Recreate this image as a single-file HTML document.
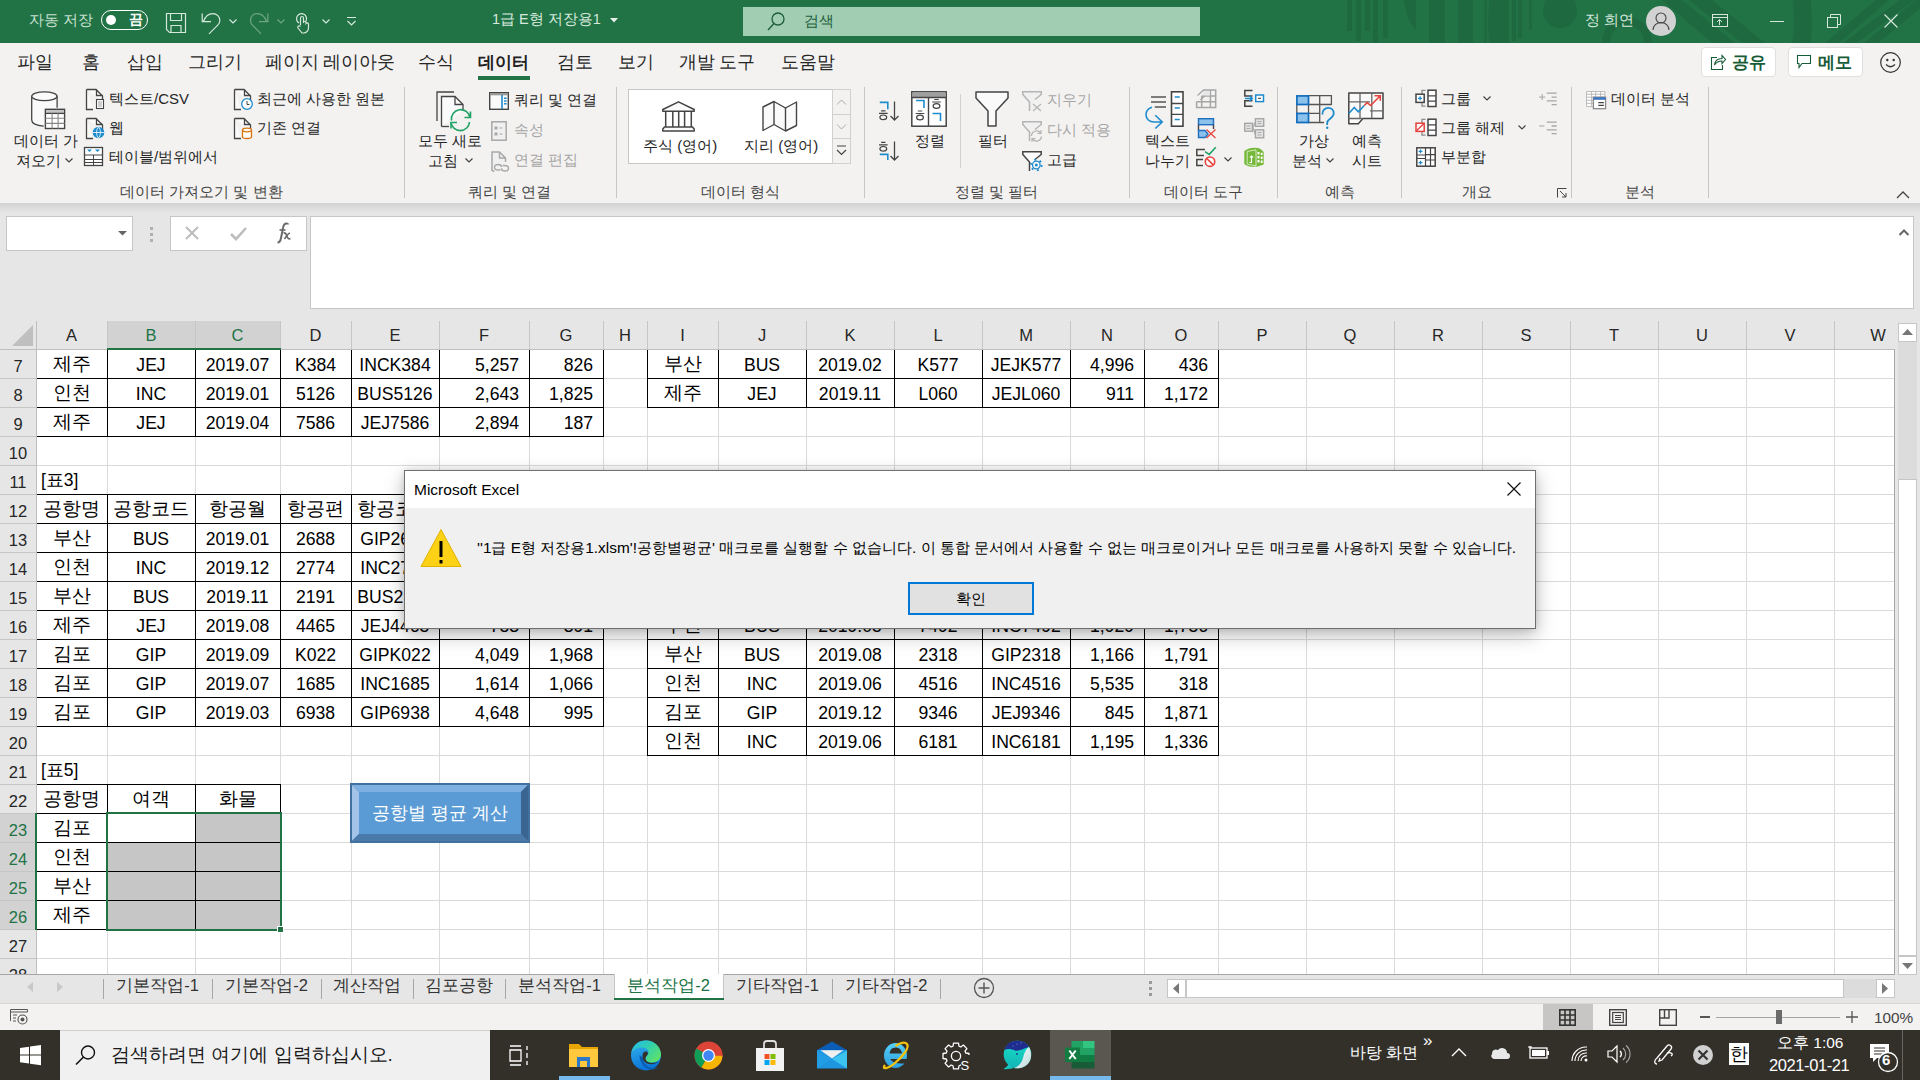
<!DOCTYPE html><html><head><meta charset="utf-8"><style>
*{box-sizing:border-box;margin:0;padding:0}
html,body{width:1920px;height:1080px;overflow:hidden;background:#fff;font-family:"Liberation Sans",sans-serif;color:#000}
.a{position:absolute}
.t{position:absolute;white-space:pre;line-height:1}
svg{position:absolute;overflow:visible}
</style></head><body><div class="a" style="left:0px;top:0px;width:1920px;height:43px;background:#217346"></div>
<svg style="left:0;top:0" width="1920" height="43" viewBox="0 0 1920 43"><defs><clipPath id="tb"><rect x="0" y="0" width="1920" height="43"/></clipPath></defs>
<g fill="#1f6940" clip-path="url(#tb)">
<rect x="1347" y="0" width="5" height="31"/><rect x="1356" y="0" width="5" height="41"/><rect x="1365" y="0" width="5" height="31"/><rect x="1373" y="0" width="5" height="43"/><rect x="1383" y="0" width="5" height="38"/>
<path d="M1404 0 H1416 V30 Q1406 20 1404 0 Z"/>
<rect x="1429" y="0" width="16" height="43"/><rect x="1458" y="0" width="15" height="43"/>
<rect x="1484" y="0" width="3" height="43"/><rect x="1491" y="0" width="6" height="43"/><rect x="1498" y="0" width="4" height="43"/><rect x="1505" y="0" width="4" height="43"/><rect x="1512" y="0" width="4" height="41"/><rect x="1518" y="0" width="4" height="38"/><rect x="1529" y="0" width="3" height="30"/>
<circle cx="1560" cy="11" r="17"/>
<circle cx="1627" cy="42" r="21" fill="none" stroke="#1f6940" stroke-width="8"/>
<path d="M1662 0 L1682 0 L1735 43 L1712 43 Z"/><path d="M1689 0 L1712 0 L1765 43 L1742 43 Z"/>
<circle cx="1650" cy="21" r="153" fill="none" stroke="#1f6940" stroke-width="18"/>
<path d="M1825 43 L1839 43 L1889 0 L1876 0 Z"/><path d="M1843 43 L1857 43 L1914 0 L1900 0 Z"/><path d="M1864 43 L1878 43 L1930 0 L1916 0 Z"/>
</g></svg>
<div class="t" style="left:29px;top:12px;font-size:15px;color:#c8e0d0;">자동 저장</div>
<div class="a" style="left:101px;top:10px;width:47px;height:20px;border:1.5px solid #fff;border-radius:10px"></div>
<div class="a" style="left:106px;top:15px;width:10px;height:10px;border-radius:50%;background:#fff"></div>
<div class="t" style="left:129px;top:12px;font-size:14px;color:#fff;font-weight:bold">끔</div>
<svg style="left:166px;top:13px" width="20" height="20" viewBox="0 0 20 20"><path d="M0.5 0.5 H19.5 V19.5 H3.5 L0.5 16.5 Z" fill="none" stroke="#d5e8dc" stroke-width="1.2"/><path d="M4.5 0.5 V7.5 H15.5 V0.5" fill="none" stroke="#d5e8dc" stroke-width="1.2"/><path d="M5 19.5 V12.5 H15 V19.5" fill="none" stroke="#d5e8dc" stroke-width="1.2"/></svg>
<svg style="left:201px;top:13px" width="20" height="22" viewBox="0 0 20 22"><path d="M1.2 0.4 V8.6 H10" fill="none" stroke="#d5e8dc" stroke-width="1.2"/><path d="M2.5 8.3 C4.5 3 8 0.6 11.8 0.6 C16 0.6 18.8 3.8 18.8 7.5 C18.8 9.2 18.2 10.6 17 11.8 L8 20.8" fill="none" stroke="#d5e8dc" stroke-width="1.2"/></svg>
<svg style="left:229px;top:19px" width="8" height="5" viewBox="0 0 8 5"><path d="M0.5 0.5 L4 4 L7.5 0.5" fill="none" stroke="#d5e8dc" stroke-width="1.2"/></svg>
<svg style="left:250px;top:13px" width="20" height="22" viewBox="0 0 20 22"><path d="M17.8 0.4 V8.6 H9" fill="none" stroke="#6fa585" stroke-width="1.2"/><path d="M16.5 8.3 C14.5 3 11 0.6 7.2 0.6 C3 0.6 0.5 3.8 0.5 7.5 C0.5 9.2 1 10.6 2.2 11.8 L11 20.8" fill="none" stroke="#6fa585" stroke-width="1.2"/></svg>
<svg style="left:277px;top:19px" width="8" height="5" viewBox="0 0 8 5"><path d="M0.5 0.5 L4 4 L7.5 0.5" fill="none" stroke="#6fa585" stroke-width="1.2"/></svg>
<svg style="left:295px;top:13px" width="15" height="20" viewBox="0 0 15 20"><path d="M4 10 A5 5 0 1 1 11 8" fill="none" stroke="#d5e8dc" stroke-width="1.2"/><path d="M5.5 12 V5 A1.5 1.5 0 0 1 8.5 5 V10 M8.5 9 A1.4 1.4 0 0 1 11 9 V10.5 A1.4 1.4 0 0 1 13.5 11 V15 A5 5 0 0 1 8.5 20 H7 L3 15 A1.4 1.4 0 0 1 5.5 13.5" fill="none" stroke="#d5e8dc" stroke-width="1.2"/></svg>
<svg style="left:322px;top:19px" width="8" height="5" viewBox="0 0 8 5"><path d="M0.5 0.5 L4 4 L7.5 0.5" fill="none" stroke="#d5e8dc" stroke-width="1.2"/></svg>
<svg style="left:347px;top:17px" width="9" height="9" viewBox="0 0 9 9"><path d="M0 0.5 H9 M0.5 4 L4.5 8 L8.5 4" fill="none" stroke="#d5e8dc" stroke-width="1.2"/></svg>
<div class="t" style="left:492px;top:12px;font-size:14.5px;color:#d5e8dc;">1급 E형 저장용1</div>
<svg style="left:610px;top:18px" width="8" height="5" viewBox="0 0 8 5"><path d="M0 0 H8 L4 4.5 Z" fill="#e8f2ec"/></svg>
<div class="a" style="left:743px;top:7px;width:457px;height:29px;background:#a1cdb3"></div>
<svg style="left:767px;top:12px" width="18" height="19" viewBox="0 0 18 19"><circle cx="11" cy="7" r="6" fill="none" stroke="#1d5e3a" stroke-width="1.3"/><path d="M7 11.5 L1 18" stroke="#1d5e3a" stroke-width="1.4"/></svg>
<div class="t" style="left:804px;top:13px;font-size:15px;color:#1d5e3a;">검색</div>
<div class="t" style="left:1585px;top:12px;font-size:15px;color:#d5e8dc;">정 희연</div>
<div class="a" style="left:1646px;top:6px;width:30px;height:30px;border-radius:50%;background:#d2d2d2"></div>
<svg style="left:1652px;top:12px" width="18" height="19" viewBox="0 0 18 19"><circle cx="9" cy="6" r="5" fill="none" stroke="#444" stroke-width="1.1"/><path d="M1 18 A8 7.5 0 0 1 17 18" fill="none" stroke="#444" stroke-width="1.1"/></svg>
<svg style="left:1712px;top:14px" width="16" height="14" viewBox="0 0 16 14"><rect x="0.5" y="0.5" width="15" height="12" fill="none" stroke="#d5e8dc" stroke-width="1"/><path d="M0.5 3.5 H15.5 M7.5 11 V5.5 M5 8 L7.5 5.5 L10 8" fill="none" stroke="#d5e8dc" stroke-width="1"/></svg>
<svg style="left:1770px;top:21px" width="14" height="2" viewBox="0 0 14 2"><path d="M0 0.5 H14" stroke="#d5e8dc" stroke-width="1"/></svg>
<svg style="left:1827px;top:14px" width="14" height="14" viewBox="0 0 14 14"><rect x="0.5" y="3.5" width="10" height="10" fill="none" stroke="#d5e8dc" stroke-width="1"/><path d="M3.5 3.5 V0.5 H13.5 V10.5 H10.5" fill="none" stroke="#d5e8dc" stroke-width="1"/></svg>
<svg style="left:1884px;top:14px" width="14" height="14" viewBox="0 0 14 14"><path d="M0.5 0.5 L13.5 13.5 M13.5 0.5 L0.5 13.5" stroke="#d5e8dc" stroke-width="1.2"/></svg>
<div class="a" style="left:0px;top:43px;width:1920px;height:160px;background:#f3f2f1"></div>
<div class="t" style="left:16.5px;top:53.7px;font-size:17.8px;color:#262626;">파일</div>
<div class="t" style="left:81.5px;top:53.7px;font-size:17.8px;color:#262626;">홈</div>
<div class="t" style="left:126.5px;top:53.7px;font-size:17.8px;color:#262626;">삽입</div>
<div class="t" style="left:187.5px;top:53.7px;font-size:17.8px;color:#262626;">그리기</div>
<div class="t" style="left:264.5px;top:53.7px;font-size:17.8px;color:#262626;">페이지 레이아웃</div>
<div class="t" style="left:417.5px;top:53.7px;font-size:17.8px;color:#262626;">수식</div>
<div class="t" style="left:478px;top:54px;font-size:17px;color:#202020;font-weight:bold">데이터</div>
<div class="t" style="left:556.5px;top:53.7px;font-size:17.8px;color:#262626;">검토</div>
<div class="t" style="left:617.5px;top:53.7px;font-size:17.8px;color:#262626;">보기</div>
<div class="t" style="left:678.5px;top:53.7px;font-size:17.8px;color:#262626;">개발 도구</div>
<div class="t" style="left:780.5px;top:53.7px;font-size:17.8px;color:#262626;">도움말</div>
<div class="a" style="left:478px;top:76px;width:52px;height:4px;background:#217346"></div>
<div class="a" style="left:1701px;top:47px;width:75px;height:30px;background:#fff;border:1px solid #e1dfdd;border-radius:4px"></div>
<div class="a" style="left:1788px;top:47px;width:75px;height:30px;background:#fff;border:1px solid #e1dfdd;border-radius:4px"></div>
<svg style="left:1711px;top:54px" width="15" height="16" viewBox="0 0 15 16"><path d="M6 3.5 H0.5 V15.5 H11.5 V11" fill="none" stroke="#185c37" stroke-width="1.1"/><path d="M3.5 11 C4 6 7 4.5 11 4.5 V1.5 L14.5 5.5 L11 9.5 V7 C8 7 5.5 8 3.5 11 Z" fill="none" stroke="#185c37" stroke-width="1.1"/></svg>
<div class="t" style="left:1732px;top:54px;font-size:16.5px;color:#185c37;font-weight:bold">공유</div>
<svg style="left:1797px;top:55px" width="14" height="14" viewBox="0 0 14 14"><path d="M0.5 0.5 H13.5 V8.5 H5 L2 12.5 V8.5 H0.5 Z" fill="none" stroke="#185c37" stroke-width="1.1"/></svg>
<div class="t" style="left:1818px;top:54px;font-size:16.5px;color:#185c37;font-weight:bold">메모</div>
<svg style="left:1880px;top:52px" width="21" height="21" viewBox="0 0 21 21"><circle cx="10.5" cy="10.5" r="9.8" fill="none" stroke="#333" stroke-width="1.2"/><circle cx="7.3" cy="8" r="1.2" fill="#333"/><circle cx="13.7" cy="8" r="1.2" fill="#333"/><path d="M6 12.5 Q10.5 17 15 12.5" fill="none" stroke="#333" stroke-width="1.2"/></svg>
<div class="a" style="left:404px;top:87px;width:1px;height:111px;background:#c8c6c4"></div>
<div class="a" style="left:616px;top:87px;width:1px;height:111px;background:#c8c6c4"></div>
<div class="a" style="left:864px;top:87px;width:1px;height:111px;background:#c8c6c4"></div>
<div class="a" style="left:1129px;top:87px;width:1px;height:111px;background:#c8c6c4"></div>
<div class="a" style="left:1277px;top:87px;width:1px;height:111px;background:#c8c6c4"></div>
<div class="a" style="left:1401px;top:87px;width:1px;height:111px;background:#c8c6c4"></div>
<div class="a" style="left:1571px;top:87px;width:1px;height:111px;background:#c8c6c4"></div>
<div class="a" style="left:1708px;top:87px;width:1px;height:111px;background:#c8c6c4"></div>
<div class="t" style="left:120px;top:184px;font-size:15px;color:#444;">데이터 가져오기 및 변환</div>
<div class="t" style="left:468px;top:184px;font-size:15px;color:#444;">쿼리 및 연결</div>
<div class="t" style="left:701px;top:184px;font-size:15px;color:#444;">데이터 형식</div>
<div class="t" style="left:955px;top:184px;font-size:15px;color:#444;">정렬 및 필터</div>
<div class="t" style="left:1164px;top:184px;font-size:15px;color:#444;">데이터 도구</div>
<div class="t" style="left:1325px;top:184px;font-size:15px;color:#444;">예측</div>
<div class="t" style="left:1462px;top:184px;font-size:15px;color:#444;">개요</div>
<div class="t" style="left:1625px;top:184px;font-size:15px;color:#444;">분석</div>
<svg style="left:1896px;top:191px" width="14" height="8" viewBox="0 0 14 8"><path d="M1 7 L7 1 L13 7" fill="none" stroke="#444" stroke-width="1.3"/></svg>
<svg style="left:31px;top:91px" width="35" height="39" viewBox="0 0 35 39"><path d="M0.7 5.5 V29 C0.7 32.5 6 34.5 12.7 35.2 V18 H26.1 V5.5 Z" fill="#fafafa"/><path d="M0.7 5.5 V29 C0.7 32.5 6 34.5 12.7 35.2" fill="none" stroke="#444" stroke-width="1.3"/><ellipse cx="13.4" cy="5.3" rx="12.7" ry="4.4" fill="#fafafa" stroke="#444" stroke-width="1.3"/><path d="M26.1 5.3 V16.7" stroke="#444" stroke-width="1.3"/><rect x="14.4" y="18.3" width="19.2" height="19.2" fill="#fff" stroke="#444" stroke-width="1.4"/><rect x="15.1" y="19" width="17.8" height="3.3" fill="#c4c4c4"/><path d="M14.4 22.4 H33.6" stroke="#444" stroke-width="1.3"/><path d="M21.1 22.4 V37.5 M27.1 22.4 V37.5 M14.4 27.3 H33.6 M14.4 32.4 H33.6" stroke="#888" stroke-width="1.1"/></svg>
<div class="t" style="left:14px;top:133px;font-size:15px;color:#262626;">데이터 가</div>
<div class="t" style="left:16px;top:153px;font-size:15px;color:#262626;">져오기</div>
<svg style="left:65px;top:158px" width="8" height="5" viewBox="0 0 8 5"><path d="M0.5 0.5 L4 4 L7.5 0.5" fill="none" stroke="#444" stroke-width="1.2"/></svg>
<svg style="left:86px;top:89px" width="20" height="21" viewBox="0 0 20 21"><path d="M0.5 0.5 H10 L16.5 7 V12 M0.5 0.5 V20.5 H7" fill="#fafafa" stroke="#444" stroke-width="1.3"/><path d="M10.5 0.5 V6.5 H16.5" fill="none" stroke="#444" stroke-width="1.3"/><rect x="10.5" y="10.5" width="7" height="9" fill="#fff" stroke="#444" stroke-width="1.1"/><path d="M12 13 H16 M12 15 H16 M12 17 H16" stroke="#888" stroke-width="0.8"/></svg>
<div class="t" style="left:109px;top:91px;font-size:15px;color:#262626;">텍스트/CSV</div>
<svg style="left:86px;top:118px" width="20" height="21" viewBox="0 0 20 21"><path d="M0.5 0.5 H10 L16.5 7 V12 M0.5 0.5 V20.5 H7" fill="#fafafa" stroke="#444" stroke-width="1.3"/><path d="M10.5 0.5 V6.5 H16.5" fill="none" stroke="#444" stroke-width="1.3"/><circle cx="12.5" cy="14.5" r="5.8" fill="#1e8bcd"/><path d="M6.7 14.5 H18.3" stroke="#fff" stroke-width="0.8"/><path d="M12.5 9 C10 11 10 18 12.5 20 C15 18 15 11 12.5 9 Z" fill="none" stroke="#fff" stroke-width="0.8"/></svg>
<div class="t" style="left:109px;top:120px;font-size:15px;color:#262626;">웹</div>
<svg style="left:84px;top:147px" width="20" height="20" viewBox="0 0 20 20"><rect x="0.5" y="0.5" width="18" height="18" fill="#fff" stroke="#444" stroke-width="1.3"/><path d="M0.5 8 H18.5 M0.5 12.5 H18.5 M0.5 15.5 H18.5 M9.5 8 V18.5" stroke="#444" stroke-width="1"/><path d="M3 2.5 H8 L5.5 5 Z M11 2.5 H16 L13.5 5 Z" fill="#1e8bcd"/></svg>
<div class="t" style="left:109px;top:149px;font-size:15px;color:#262626;">테이블/범위에서</div>
<svg style="left:234px;top:89px" width="20" height="21" viewBox="0 0 20 21"><path d="M0.5 0.5 H10 L16.5 7 V12 M0.5 0.5 V20.5 H7" fill="#fafafa" stroke="#444" stroke-width="1.3"/><path d="M10.5 0.5 V6.5 H16.5" fill="none" stroke="#444" stroke-width="1.3"/><circle cx="13" cy="15" r="5.3" fill="#fff" stroke="#1e8bcd" stroke-width="1.3"/><path d="M13 12 V15.5 H15.5" fill="none" stroke="#444" stroke-width="1"/></svg>
<div class="t" style="left:257px;top:91px;font-size:15px;color:#262626;">최근에 사용한 원본</div>
<svg style="left:234px;top:118px" width="20" height="21" viewBox="0 0 20 21"><path d="M0.5 0.5 H10 L16.5 7 V12 M0.5 0.5 V20.5 H7" fill="#fafafa" stroke="#444" stroke-width="1.3"/><path d="M10.5 0.5 V6.5 H16.5" fill="none" stroke="#444" stroke-width="1.3"/><path d="M8.5 12 V19 C8.5 21 17.5 21 17.5 19 V12" fill="#fff" stroke="#d9730d" stroke-width="1.3"/><ellipse cx="13" cy="12" rx="4.5" ry="1.8" fill="#fff" stroke="#d9730d" stroke-width="1.3"/></svg>
<div class="t" style="left:257px;top:120px;font-size:15px;color:#262626;">기존 연결</div>
<svg style="left:436px;top:91px" width="35" height="40" viewBox="0 0 35 40"><path d="M1 30 V1 H18" fill="none" stroke="#444" stroke-width="1.3"/><path d="M5.5 35.5 V5.5 H19 L27 13.5 V20" fill="#fafafa" stroke="#444" stroke-width="1.3"/><path d="M19 5.5 V13.5 H27" fill="none" stroke="#444" stroke-width="1.3"/><path d="M5.5 35.5 H13" stroke="#444" stroke-width="1.3"/><path d="M15.5 29.5 A9.3 9.3 0 0 1 34 26.5" fill="none" stroke="#21a366" stroke-width="1.6"/><path d="M34.5 20.5 V26.5 H28.5" fill="none" stroke="#21a366" stroke-width="1.6"/><path d="M33.5 31 A9.3 9.3 0 0 1 15 31.5" fill="none" stroke="#21a366" stroke-width="1.6"/><path d="M15 37.5 V31.5 H21" fill="none" stroke="#21a366" stroke-width="1.6"/></svg>
<div class="t" style="left:418px;top:133px;font-size:15px;color:#262626;">모두 새로</div>
<div class="t" style="left:428px;top:153px;font-size:15px;color:#262626;">고침</div>
<svg style="left:465px;top:158px" width="8" height="5" viewBox="0 0 8 5"><path d="M0.5 0.5 L4 4 L7.5 0.5" fill="none" stroke="#444" stroke-width="1.2"/></svg>
<svg style="left:489px;top:92px" width="20" height="18" viewBox="0 0 20 18"><rect x="0.7" y="0.7" width="18.6" height="16.6" fill="#fafafa" stroke="#444" stroke-width="1.4"/><rect x="1" y="1" width="18" height="2.3" fill="#999"/><path d="M13 3 V17" stroke="#1e8bcd" stroke-width="1.6"/><path d="M15 6.2 H17.6 M15 9 H17.6 M15 11.8 H17.6" stroke="#1e8bcd" stroke-width="1.6"/></svg>
<div class="t" style="left:514px;top:92px;font-size:15px;color:#262626;">쿼리 및 연결</div>
<svg style="left:491px;top:121px" width="16" height="20" viewBox="0 0 16 20"><rect x="0.8" y="0.8" width="14.4" height="18.4" fill="#f0f0f0" stroke="#a8a8a8" stroke-width="1.5"/><rect x="3.5" y="5.5" width="3" height="3" fill="#a8a8a8"/><rect x="3.5" y="11.5" width="3" height="3" fill="#a8a8a8"/><path d="M8.5 7 H11.5 M8.5 13 H11.5" stroke="#a8a8a8" stroke-width="1.2"/></svg>
<div class="t" style="left:514px;top:122px;font-size:15px;color:#a6a6a6;">속성</div>
<svg style="left:491px;top:151px" width="19" height="21" viewBox="0 0 19 21"><path d="M1 20 V1 H8.5 L14.5 7 V11 M1 20 H3.5" fill="#f0f0f0" stroke="#a8a8a8" stroke-width="1.5"/><path d="M8.5 1 V7 H14.5" fill="none" stroke="#a8a8a8" stroke-width="1.4"/><path d="M7 13.5 C4.5 13.5 3.5 15 3.5 16.3 C3.5 18 5 19 7.5 19 H9.5 M11.5 14.5 H13.5 C16 14.5 17.5 15.5 17.5 17.2 C17.5 18.5 16.5 20 14 20 C11.5 20 10.5 18.5 10.5 17.2 M10.5 16 C10.5 14.5 9.5 13.5 7 13.5" fill="none" stroke="#a8a8a8" stroke-width="1.4"/></svg>
<div class="t" style="left:514px;top:152px;font-size:15px;color:#a6a6a6;">연결 편집</div>
<div class="a" style="left:628px;top:89px;width:223px;height:75px;background:#fff;border:1px solid #c8c6c4"></div>
<div class="a" style="left:832px;top:89px;width:19px;height:75px;background:#f3f2f1;border:1px solid #d2d0ce"></div>
<div class="a" style="left:832px;top:114px;width:19px;height:1px;background:#d2d0ce"></div>
<div class="a" style="left:832px;top:138px;width:19px;height:1px;background:#d2d0ce"></div>
<svg style="left:836px;top:99px" width="11" height="6" viewBox="0 0 11 6"><path d="M1 5.5 L5.5 1 L10 5.5" fill="none" stroke="#aaa" stroke-width="1"/></svg>
<svg style="left:836px;top:124px" width="11" height="6" viewBox="0 0 11 6"><path d="M1 0.5 L5.5 5 L10 0.5" fill="none" stroke="#aaa" stroke-width="1"/></svg>
<svg style="left:836px;top:145px" width="11" height="12" viewBox="0 0 11 12"><path d="M1 1 H10 M1 5 L5.5 9.5 L10 5" fill="none" stroke="#444" stroke-width="1.2"/></svg>
<svg style="left:661px;top:101px" width="35" height="31" viewBox="0 0 35 31"><path d="M17.5 0.8 L33.2 8.5 V10.3 H1.8 V8.5 Z" fill="#fafafa" stroke="#444" stroke-width="1.5" stroke-linejoin="round"/><path d="M4.7 10.5 V26 M11.8 10.5 V26 M17.7 10.5 V26 M23.6 10.5 V26 M30.3 10.5 V26" stroke="#444" stroke-width="1.5"/><path d="M3.5 26 H31.5 L33.2 28 V30 H1.8 V28 Z" fill="#fafafa" stroke="#444" stroke-width="1.5" stroke-linejoin="round"/></svg>
<div class="t" style="left:643px;top:138px;font-size:15px;color:#262626;">주식 (영어)</div>
<svg style="left:762px;top:101px" width="35" height="31" viewBox="0 0 35 31"><path d="M1 6 L12 0.5 L23.5 7 L34.5 1 V24.5 L23.5 30 L12 23.5 L1 29.5 Z" fill="#fafafa" stroke="#444" stroke-width="1.4" stroke-linejoin="round"/><path d="M12 0.5 V23.5 M23.5 7 V30" stroke="#444" stroke-width="1.4"/></svg>
<div class="t" style="left:744px;top:138px;font-size:15px;color:#262626;">지리 (영어)</div>
<svg style="left:879px;top:101px" width="20" height="20" viewBox="0 0 20 20"><path d="M0.8 1.4 H8.8 V8.2" fill="none" stroke="#1e8bcd" stroke-width="1.6"/><path d="M2.0999999999999996 9.8 H6.5 M0.0 12.3 H8.6" stroke="#444" stroke-width="1.2"/><ellipse cx="4.3" cy="16.3" rx="3.4" ry="2.3" fill="none" stroke="#444" stroke-width="1.2"/><path d="M15.5 0.5 V19 M11.5 15 L15.5 19 L19.5 15" fill="none" stroke="#444" stroke-width="1.3"/></svg>
<svg style="left:879px;top:141px" width="20" height="20" viewBox="0 0 20 20"><path d="M2.0999999999999996 1.2999999999999998 H6.5 M0.0 3.8 H8.6" stroke="#444" stroke-width="1.2"/><ellipse cx="4.3" cy="7.8" rx="3.4" ry="2.3" fill="none" stroke="#444" stroke-width="1.2"/><path d="M0.8 13.4 H8.8 V19.0" fill="none" stroke="#1e8bcd" stroke-width="1.6"/><path d="M15.5 0.5 V19 M11.5 15 L15.5 19 L19.5 15" fill="none" stroke="#444" stroke-width="1.3"/></svg>
<svg style="left:911px;top:91px" width="36" height="36" viewBox="0 0 36 36"><rect x="0.8" y="0.8" width="34.4" height="34.4" fill="#fff" stroke="#444" stroke-width="1.5"/><rect x="1.5" y="1.5" width="33" height="4.5" fill="#a0a0a0"/><path d="M0.8 6.5 H35.2 M17.5 6.5 V35" stroke="#444" stroke-width="1.4"/><path d="M5 9.5 H13 V17.0" fill="none" stroke="#1e8bcd" stroke-width="1.6"/><path d="M6.8 20.0 H11.2 M4.7 22.5 H13.3" stroke="#444" stroke-width="1.2"/><ellipse cx="9" cy="26.5" rx="3.4" ry="2.3" fill="none" stroke="#444" stroke-width="1.2"/><path d="M23.3 8.5 H27.7 M21.2 11 H29.8" stroke="#444" stroke-width="1.2"/><ellipse cx="25.5" cy="15" rx="3.4" ry="2.3" fill="none" stroke="#444" stroke-width="1.2"/><path d="M21.5 22.5 H29.5 V30.0" fill="none" stroke="#1e8bcd" stroke-width="1.6"/></svg>
<div class="t" style="left:915px;top:133px;font-size:15px;color:#262626;">정렬</div>
<div class="a" style="left:960px;top:94px;width:1px;height:74px;background:#d2d0ce"></div>
<svg style="left:975px;top:91px" width="34" height="36" viewBox="0 0 34 36"><path d="M1 1 H33 V7 L21 20 V35 H13 V20 L1 7 Z" fill="#fafafa" stroke="#444" stroke-width="1.5" stroke-linejoin="round"/></svg>
<div class="t" style="left:978px;top:133px;font-size:15px;color:#262626;">필터</div>
<svg style="left:1022px;top:91px" width="21" height="21" viewBox="0 0 21 21"><path d="M0.8 0.8 H19.2 V3.5 L12.5 10 V19.5 H7.5 V11 L0.8 3.5 Z" fill="#f0f0f0" stroke="none"/><path d="M13 8.5 L19.2 3.5 V0.8 H0.8 V3.5 L7.5 11 V20" fill="none" stroke="#b4b4b4" stroke-width="1.5" stroke-linejoin="miter"/><path d="M11 13 L19 20 M19 13 L11 20" stroke="#b4b4b4" stroke-width="1.2"/></svg>
<div class="t" style="left:1047px;top:92px;font-size:15px;color:#a6a6a6;">지우기</div>
<svg style="left:1022px;top:121px" width="21" height="21" viewBox="0 0 21 21"><path d="M0.8 0.8 H19.2 V3.5 L12.5 10 V19.5 H7.5 V11 L0.8 3.5 Z" fill="#f0f0f0" stroke="none"/><path d="M13 8.5 L19.2 3.5 V0.8 H0.8 V3.5 L7.5 11 V20" fill="none" stroke="#b4b4b4" stroke-width="1.5" stroke-linejoin="miter"/><circle cx="14.5" cy="15" r="5.5" fill="#f3f2f1"/><path d="M9.5 15 A5 5 0 0 1 18.5 12" fill="none" stroke="#b4b4b4" stroke-width="1.3"/><path d="M19 9 V12.5 H15.5" fill="none" stroke="#b4b4b4" stroke-width="1.2"/><path d="M19.5 15.5 A5 5 0 0 1 10.5 18" fill="none" stroke="#b4b4b4" stroke-width="1.3"/><path d="M10 21 V17.5 H13.5" fill="none" stroke="#b4b4b4" stroke-width="1.2"/></svg>
<div class="t" style="left:1047px;top:122px;font-size:15px;color:#a6a6a6;">다시 적용</div>
<svg style="left:1022px;top:151px" width="21" height="21" viewBox="0 0 21 21"><path d="M0.8 0.8 H19.2 V3.5 L12.5 10 V19.5 H7.5 V11 L0.8 3.5 Z" fill="#fafafa" stroke="none"/><path d="M13 8.5 L19.2 3.5 V0.8 H0.8 V3.5 L7.5 11 V20" fill="none" stroke="#444" stroke-width="1.5" stroke-linejoin="miter"/><circle cx="14.3" cy="14" r="5.4" fill="none" stroke="#1e8bcd" stroke-width="1.8" stroke-dasharray="1.9 3.75"/><circle cx="14.3" cy="14" r="3.8" fill="#fafafa" stroke="#1e8bcd" stroke-width="1.3"/><circle cx="14.3" cy="14" r="1.5" fill="#1e8bcd"/></svg>
<div class="t" style="left:1047px;top:152px;font-size:15px;color:#262626;">고급</div>
<svg style="left:1145px;top:91px" width="40" height="39" viewBox="0 0 40 39"><path d="M6 6 H21 M6 11 H21 M9.8 16 H21" stroke="#555" stroke-width="1.7"/><path d="M7 16.2 C3 17.5 1 20.5 1 23.8 C1 28 4.5 31 9 31 H17 M10.3 24.3 L17.2 31 L10.3 37.5" fill="none" stroke="#1e8bcd" stroke-width="1.6"/><rect x="26.5" y="0.8" width="11.5" height="34.4" fill="#fff" stroke="#444" stroke-width="1.6"/><path d="M26.5 12.5 H38 M26.5 23.4 H38" stroke="#444" stroke-width="1.4"/><path d="M29.7 6.1 H34.8 M29.7 17.1 H34.8 M29.7 28.5 H34.8" stroke="#1e8bcd" stroke-width="1.5"/></svg>
<div class="t" style="left:1145px;top:133px;font-size:15px;color:#262626;">텍스트</div>
<div class="t" style="left:1145px;top:153px;font-size:15px;color:#262626;">나누기</div>
<svg style="left:1196px;top:89px" width="21" height="20" viewBox="0 0 21 20"><path d="M8 1 H19.7 V18.5 H0.6 V12.5 M5.7 7 V18.5 M14.4 1 V18.5 M5.7 7 H19.7 M0.6 12.7 H19.7" fill="none" stroke="#a6a6a6" stroke-width="1.5"/><path d="M0.6 6.5 L7.3 0.3 H9.3 L2.6 6.5 Z M3.5 11 L9 5.5 H11 L5.5 11 Z" fill="#a6a6a6"/><rect x="7" y="2" width="7" height="4.5" fill="#e6e6e6"/></svg>
<svg style="left:1196px;top:118px" width="21" height="21" viewBox="0 0 21 21"><rect x="2.5" y="0.7" width="15" height="6" fill="#8cc1ec" stroke="#1f6fbf" stroke-width="1.4"/><path d="M2.5 6.7 V12.5 M17.5 6.7 V11" stroke="#444" stroke-width="1.4"/><path d="M2.5 12.5 H9 L12 16 L9 19.5 H2.5 Z" fill="#8cc1ec" stroke="#1f6fbf" stroke-width="1.4"/><path d="M10.5 11.5 L19.5 20 M19.5 11.5 L10.5 20" stroke="#e8403c" stroke-width="1.2"/></svg>
<svg style="left:1196px;top:147px" width="21" height="21" viewBox="0 0 21 21"><path d="M9 2.6 H0.8 V8.4 H8 M7 12.6 H0.8 V18.4 H7" fill="none" stroke="#444" stroke-width="1.5"/><path d="M9 4.7 L13.2 7.4 L19.8 0.3" fill="none" stroke="#21a366" stroke-width="1.6"/><circle cx="14" cy="14.7" r="4.7" fill="#fff" stroke="#e8403c" stroke-width="1.6"/><path d="M10.8 11.5 L17.2 17.9" stroke="#e8403c" stroke-width="1.6"/></svg>
<svg style="left:1224px;top:157px" width="8" height="5" viewBox="0 0 8 5"><path d="M0.5 0.5 L4 4 L7.5 0.5" fill="none" stroke="#444" stroke-width="1.2"/></svg>
<svg style="left:1244px;top:89px" width="21" height="19" viewBox="0 0 21 19"><path d="M8.5 1.4 H0.8 V7 H8.5 M8.5 11.8 H0.8 V17.2 H8.5" fill="none" stroke="#444" stroke-width="1.5"/><path d="M1 9.4 H8 M5.5 6.7 L8.3 9.4 L5.5 12.1" fill="none" stroke="#1e8bcd" stroke-width="1.5"/><rect x="11.7" y="6" width="7.8" height="6.6" fill="#fff" stroke="#1e8bcd" stroke-width="1.5"/><path d="M14 9.3 H17" stroke="#444" stroke-width="1.1"/></svg>
<svg style="left:1244px;top:118px" width="21" height="21" viewBox="0 0 21 21"><rect x="0.7" y="5.3" width="7.8" height="7.9" fill="#e3e3e3" stroke="#a6a6a6" stroke-width="1.4"/><rect x="11.4" y="0.7" width="8.3" height="7.6" fill="#e3e3e3" stroke="#a6a6a6" stroke-width="1.4"/><rect x="11.4" y="11.8" width="8.3" height="8" fill="#e3e3e3" stroke="#a6a6a6" stroke-width="1.4"/><path d="M8.5 9.3 C10 9.3 10 4.5 11.4 4.5 M8.5 9.3 C10 9.3 10 15.8 11.4 15.8" fill="none" stroke="#a6a6a6" stroke-width="1.2"/><path d="M2.5 8 H6.5 M2.5 10.5 H6.5 M13.5 3.5 H17.5 M13.5 5.5 H17.5 M13.5 14.5 H17.5 M13.5 17 H17.5" stroke="#a6a6a6" stroke-width="0.9"/></svg>
<svg style="left:1244px;top:147px" width="21" height="21" viewBox="0 0 21 21"><path d="M0.3 4 Q6 -0.5 14 1 Q17 1.8 18 3.3 L19.7 5 V17.5 L13 19.7 Q5 20.5 0.3 17 Z" fill="#76b83a"/><path d="M3.2 4.5 L12 2.8 V19 L3.2 17 Z" fill="none" stroke="#eaf5dd" stroke-width="0.8"/><path d="M13.5 5 H15.5 V7.5 H13.5 Z M16.8 5.7 H18.6 V8 H16.8 Z M13.5 9 H15.5 V11.5 H13.5 Z M16.8 9.5 H18.6 V12 H16.8 Z M13.5 13 H15.5 V15.5 H13.5 Z M16.8 13.5 H18.6 V16 H16.8 Z" fill="#fff"/><path d="M5.5 15.5 H7.5 V9 M6 10.5 L7.5 9 L9 10.5" fill="none" stroke="#fff" stroke-width="1.1"/></svg>
<svg style="left:1296px;top:95px" width="40" height="35" viewBox="0 0 40 35"><path d="M12.5 0.6 H35.4 V10 M12.5 9.5 H35.4 M12.5 18.4 H23.7 M12.5 27.5 H28 M23.7 0.6 V27.5 M0.8 9.5 V18.4 M12.5 9.5 V18.4" fill="none" stroke="#555" stroke-width="1.3"/><rect x="0.9" y="0.9" width="11.6" height="8.6" fill="#8cc1ec" stroke="#0f6cbd" stroke-width="1.7"/><rect x="0.9" y="18.4" width="11.6" height="9.1" fill="#8cc1ec" stroke="#0f6cbd" stroke-width="1.7"/><path d="M26.3 19.5 C26.3 15.5 29 12.9 32.2 12.9 C35.5 12.9 37.7 15.3 37.7 18.3 C37.7 21.3 35.5 22.8 33.5 24.2 C32 25.2 31.2 26.5 31.2 28 V30" fill="none" stroke="#1e8bcd" stroke-width="1.8"/><circle cx="31.2" cy="32.8" r="1.2" fill="#1e8bcd"/></svg>
<div class="t" style="left:1299px;top:133px;font-size:15px;color:#262626;">가상</div>
<div class="t" style="left:1292px;top:153px;font-size:15px;color:#262626;">분석</div>
<svg style="left:1326px;top:158px" width="8" height="5" viewBox="0 0 8 5"><path d="M0.5 0.5 L4 4 L7.5 0.5" fill="none" stroke="#444" stroke-width="1.2"/></svg>
<svg style="left:1348px;top:92px" width="37" height="33" viewBox="0 0 37 33"><path d="M0.8 1 H35 V26.5 H15 L10.3 31.7 H0.8 Z" fill="#fafafa" stroke="#444" stroke-width="1.5" stroke-linejoin="round"/><path d="M12 1 V26.5 M23.8 1 V26.5 M0.8 9.9 H22 M22 18.8 H35 M0.8 26.5 H15" fill="none" stroke="#666" stroke-width="1.3"/><path d="M0.8 21.5 L6.3 15.5 L10.3 19.8 L16.3 13.5" fill="none" stroke="#1e8bcd" stroke-width="1.6"/><path d="M16.3 13.5 L19.2 10.6 L22.6 13.5 L32.3 3.8 M26.5 3.8 H32.3 V8.7" fill="none" stroke="#e8403c" stroke-width="1.6"/></svg>
<div class="t" style="left:1352px;top:133px;font-size:15px;color:#262626;">예측</div>
<div class="t" style="left:1352px;top:153px;font-size:15px;color:#262626;">시트</div>
<svg style="left:1415px;top:89px" width="22" height="19" viewBox="0 0 22 19"><path d="M10.5 1.4 H7 V17.2 H10.5" fill="none" stroke="#8a8a8a" stroke-width="1.3"/><rect x="1" y="5.2" width="8.2" height="8.2" fill="#fff" stroke="#444" stroke-width="1.5"/><path d="M5.1 7.3 V11.3 M3.1 9.3 H7.1" stroke="#1e8bcd" stroke-width="1.3"/><rect x="13" y="1.2" width="8" height="16.3" fill="#fff" stroke="#444" stroke-width="1.5"/><path d="M13 6.8 H21 M13 12.2 H21" stroke="#444" stroke-width="1.2"/></svg>
<div class="t" style="left:1441px;top:91px;font-size:15px;color:#262626;">그룹</div>
<svg style="left:1483px;top:96px" width="8" height="5" viewBox="0 0 8 5"><path d="M0.5 0.5 L4 4 L7.5 0.5" fill="none" stroke="#444" stroke-width="1.2"/></svg>
<svg style="left:1415px;top:118px" width="22" height="19" viewBox="0 0 22 19"><path d="M10.5 1.4 H7 V17.2 H10.5" fill="none" stroke="#8a8a8a" stroke-width="1.3"/><rect x="1" y="5.2" width="8.2" height="8.2" fill="#fff" stroke="#e8403c" stroke-width="1.5"/><path d="M1.5 12.8 L8.7 5.8" stroke="#e8403c" stroke-width="1.3"/><rect x="13" y="1.2" width="8" height="16.3" fill="#fff" stroke="#444" stroke-width="1.5"/><path d="M13 6.8 H21 M13 12.2 H21" stroke="#444" stroke-width="1.2"/></svg>
<div class="t" style="left:1441px;top:120px;font-size:15px;color:#262626;">그룹 해제</div>
<svg style="left:1518px;top:125px" width="8" height="5" viewBox="0 0 8 5"><path d="M0.5 0.5 L4 4 L7.5 0.5" fill="none" stroke="#444" stroke-width="1.2"/></svg>
<svg style="left:1416px;top:147px" width="20" height="20" viewBox="0 0 20 20"><rect x="0.8" y="0.8" width="18.4" height="18.4" fill="#fff" stroke="#444" stroke-width="1.5"/><path d="M9.5 0.8 V19.2 M14.5 0.8 V19.2 M9.5 7.6 H19.2 M9.5 13 H19.2" stroke="#444" stroke-width="1.2"/><path d="M0.8 8 H9.5 M0.8 11.5 H9.5" stroke="#444" stroke-width="1.2"/><path d="M4.5 2.5 V6.3 M2.6 4.4 H6.4 M4.5 13.7 V17.5 M2.6 15.6 H6.4" stroke="#1e8bcd" stroke-width="1.3"/></svg>
<div class="t" style="left:1441px;top:149px;font-size:15px;color:#262626;">부분합</div>
<svg style="left:1538px;top:91px" width="20" height="16" viewBox="0 0 20 16"><path d="M1.2 6.1 H7.2 M4.2 3.1 V9.1" stroke="#b0b0b0" stroke-width="1.2"/><path d="M8.8 2.2 H18.7 M13.6 6.1 H18.7 M8.8 9.8 H18.7 M13.6 13.6 H18.7" stroke="#a6a6a6" stroke-width="1.3"/></svg>
<svg style="left:1538px;top:120px" width="20" height="16" viewBox="0 0 20 16"><path d="M1.2 6 H6.3" stroke="#b0b0b0" stroke-width="1.2"/><path d="M8.8 2.2 H18.7 M13.6 6 H18.7 M8.8 9.8 H18.7 M13.6 13.6 H18.7" stroke="#a6a6a6" stroke-width="1.3"/></svg>
<svg style="left:1557px;top:188px" width="10" height="10" viewBox="0 0 10 10"><path d="M0.5 9.5 V0.5 H9.5" fill="none" stroke="#444" stroke-width="1"/><path d="M3 3 L9 9 M9 5 V9 H5" fill="none" stroke="#444" stroke-width="1"/></svg>
<svg style="left:1586px;top:91px" width="21" height="19" viewBox="0 0 21 19"><path d="M0.5 0.5 H18.9 V15.6 H0.5 Z M0.5 3.2 H18.9 M0.5 6.2 H18.9 M0.5 9.3 H18.9 M0.5 12.3 H18.9 M5.6 0.5 V15.6 M9.7 0.5 V15.6 M14.6 0.5 V15.6" fill="#fff" stroke="#b4b4b4" stroke-width="0.9"/><rect x="7.4" y="6.2" width="12.2" height="11.5" fill="#fff" stroke="#8a8a8a" stroke-width="1.3"/><rect x="7.4" y="6.2" width="12.2" height="2.6" fill="#3b78c4"/><path d="M12.3 11.6 H17.9 M12.3 14.4 H17.9" stroke="#444" stroke-width="1.1"/></svg>
<div class="t" style="left:1611px;top:91px;font-size:15px;color:#262626;">데이터 분석</div>
<div class="a" style="left:0px;top:203px;width:1920px;height:118px;background:#e6e6e6"></div>
<div class="a" style="left:0px;top:203px;width:1920px;height:10px;background:linear-gradient(#d2d2d2,#e6e6e6)"></div>
<div class="a" style="left:6px;top:216px;width:127px;height:35px;background:#fff;border:1px solid #c6c6c6"></div>
<svg style="left:118px;top:231px" width="9" height="5" viewBox="0 0 9 5"><path d="M0 0 H9 L4.5 4.5 Z" fill="#666"/></svg>
<div class="a" style="left:150px;top:227px;width:3px;height:3px;background:#b0b0b0"></div>
<div class="a" style="left:150px;top:233px;width:3px;height:3px;background:#b0b0b0"></div>
<div class="a" style="left:150px;top:239px;width:3px;height:3px;background:#b0b0b0"></div>
<div class="a" style="left:170px;top:216px;width:137px;height:35px;background:#fff;border:1px solid #c6c6c6"></div>
<svg style="left:185px;top:226px" width="14" height="14" viewBox="0 0 14 14"><path d="M1 1 L13 13 M13 1 L1 13" stroke="#bdbdbd" stroke-width="2"/></svg>
<svg style="left:230px;top:227px" width="17" height="13" viewBox="0 0 17 13"><path d="M1 7 L6 12 L16 1" fill="none" stroke="#bdbdbd" stroke-width="2.6"/></svg>
<svg style="left:274px;top:222px" width="18" height="21" viewBox="0 0 18 21"><path d="M3.5 20.5 C5.5 20.5 6.5 19 7 16 L9 6 C9.5 3 10.5 1.5 12.5 1.5 C13.5 1.5 14 2 14 2.5" fill="none" stroke="#6a6a6a" stroke-width="2"/><path d="M5.5 8 H11.5" stroke="#6a6a6a" stroke-width="1.6"/><path d="M9.5 11 C11 10.5 12 11 13 14 C13.5 16 14.5 17.5 16.5 16.5 M16 11 C14 11.5 12 14.5 10.5 17" fill="none" stroke="#6a6a6a" stroke-width="1.6"/></svg>
<div class="a" style="left:310px;top:216px;width:1604px;height:93px;background:#fff;border:1px solid #c6c6c6"></div>
<svg style="left:1899px;top:229px" width="10" height="7" viewBox="0 0 10 7"><path d="M0.5 6 L5 1.5 L9.5 6" fill="none" stroke="#666" stroke-width="2"/></svg>
<div class="a" style="left:0px;top:321px;width:1895px;height:28px;background:#e6e6e6"></div>
<div class="a" style="left:108px;top:321px;width:172px;height:28px;background:#d2d2d2"></div>
<div class="a" style="left:0px;top:350px;width:36px;height:624px;background:#e6e6e6"></div>
<div class="a" style="left:0px;top:814px;width:36px;height:115px;background:#d2d2d2"></div>
<svg style="left:12px;top:325px" width="22" height="21" viewBox="0 0 22 21"><path d="M21 0 L21 21 L0 21 Z" fill="#bfbfbf"/></svg>
<div class="a" style="left:37px;top:350px;width:1857px;height:624px;background:#fff"></div>
<div class="a" style="left:107px;top:350px;width:1px;height:624px;background:#dadada"></div><div class="a" style="left:107px;top:321px;width:1px;height:28px;background:#c6c6c6"></div><div class="a" style="left:195px;top:350px;width:1px;height:624px;background:#dadada"></div><div class="a" style="left:195px;top:321px;width:1px;height:28px;background:#c6c6c6"></div><div class="a" style="left:280px;top:350px;width:1px;height:624px;background:#dadada"></div><div class="a" style="left:280px;top:321px;width:1px;height:28px;background:#c6c6c6"></div><div class="a" style="left:351px;top:350px;width:1px;height:624px;background:#dadada"></div><div class="a" style="left:351px;top:321px;width:1px;height:28px;background:#c6c6c6"></div><div class="a" style="left:439px;top:350px;width:1px;height:624px;background:#dadada"></div><div class="a" style="left:439px;top:321px;width:1px;height:28px;background:#c6c6c6"></div><div class="a" style="left:529px;top:350px;width:1px;height:624px;background:#dadada"></div><div class="a" style="left:529px;top:321px;width:1px;height:28px;background:#c6c6c6"></div><div class="a" style="left:603px;top:350px;width:1px;height:624px;background:#dadada"></div><div class="a" style="left:603px;top:321px;width:1px;height:28px;background:#c6c6c6"></div><div class="a" style="left:647px;top:350px;width:1px;height:624px;background:#dadada"></div><div class="a" style="left:647px;top:321px;width:1px;height:28px;background:#c6c6c6"></div><div class="a" style="left:718px;top:350px;width:1px;height:624px;background:#dadada"></div><div class="a" style="left:718px;top:321px;width:1px;height:28px;background:#c6c6c6"></div><div class="a" style="left:806px;top:350px;width:1px;height:624px;background:#dadada"></div><div class="a" style="left:806px;top:321px;width:1px;height:28px;background:#c6c6c6"></div><div class="a" style="left:894px;top:350px;width:1px;height:624px;background:#dadada"></div><div class="a" style="left:894px;top:321px;width:1px;height:28px;background:#c6c6c6"></div><div class="a" style="left:982px;top:350px;width:1px;height:624px;background:#dadada"></div><div class="a" style="left:982px;top:321px;width:1px;height:28px;background:#c6c6c6"></div><div class="a" style="left:1070px;top:350px;width:1px;height:624px;background:#dadada"></div><div class="a" style="left:1070px;top:321px;width:1px;height:28px;background:#c6c6c6"></div><div class="a" style="left:1144px;top:350px;width:1px;height:624px;background:#dadada"></div><div class="a" style="left:1144px;top:321px;width:1px;height:28px;background:#c6c6c6"></div><div class="a" style="left:1218px;top:350px;width:1px;height:624px;background:#dadada"></div><div class="a" style="left:1218px;top:321px;width:1px;height:28px;background:#c6c6c6"></div><div class="a" style="left:1306px;top:350px;width:1px;height:624px;background:#dadada"></div><div class="a" style="left:1306px;top:321px;width:1px;height:28px;background:#c6c6c6"></div><div class="a" style="left:1394px;top:350px;width:1px;height:624px;background:#dadada"></div><div class="a" style="left:1394px;top:321px;width:1px;height:28px;background:#c6c6c6"></div><div class="a" style="left:1482px;top:350px;width:1px;height:624px;background:#dadada"></div><div class="a" style="left:1482px;top:321px;width:1px;height:28px;background:#c6c6c6"></div><div class="a" style="left:1570px;top:350px;width:1px;height:624px;background:#dadada"></div><div class="a" style="left:1570px;top:321px;width:1px;height:28px;background:#c6c6c6"></div><div class="a" style="left:1658px;top:350px;width:1px;height:624px;background:#dadada"></div><div class="a" style="left:1658px;top:321px;width:1px;height:28px;background:#c6c6c6"></div><div class="a" style="left:1746px;top:350px;width:1px;height:624px;background:#dadada"></div><div class="a" style="left:1746px;top:321px;width:1px;height:28px;background:#c6c6c6"></div><div class="a" style="left:1834px;top:350px;width:1px;height:624px;background:#dadada"></div><div class="a" style="left:1834px;top:321px;width:1px;height:28px;background:#c6c6c6"></div><div class="a" style="left:37px;top:378px;width:1857px;height:1px;background:#dadada"></div><div class="a" style="left:0px;top:378px;width:36px;height:1px;background:#c6c6c6"></div><div class="a" style="left:37px;top:407px;width:1857px;height:1px;background:#dadada"></div><div class="a" style="left:0px;top:407px;width:36px;height:1px;background:#c6c6c6"></div><div class="a" style="left:37px;top:436px;width:1857px;height:1px;background:#dadada"></div><div class="a" style="left:0px;top:436px;width:36px;height:1px;background:#c6c6c6"></div><div class="a" style="left:37px;top:465px;width:1857px;height:1px;background:#dadada"></div><div class="a" style="left:0px;top:465px;width:36px;height:1px;background:#c6c6c6"></div><div class="a" style="left:37px;top:494px;width:1857px;height:1px;background:#dadada"></div><div class="a" style="left:0px;top:494px;width:36px;height:1px;background:#c6c6c6"></div><div class="a" style="left:37px;top:523px;width:1857px;height:1px;background:#dadada"></div><div class="a" style="left:0px;top:523px;width:36px;height:1px;background:#c6c6c6"></div><div class="a" style="left:37px;top:552px;width:1857px;height:1px;background:#dadada"></div><div class="a" style="left:0px;top:552px;width:36px;height:1px;background:#c6c6c6"></div><div class="a" style="left:37px;top:581px;width:1857px;height:1px;background:#dadada"></div><div class="a" style="left:0px;top:581px;width:36px;height:1px;background:#c6c6c6"></div><div class="a" style="left:37px;top:610px;width:1857px;height:1px;background:#dadada"></div><div class="a" style="left:0px;top:610px;width:36px;height:1px;background:#c6c6c6"></div><div class="a" style="left:37px;top:639px;width:1857px;height:1px;background:#dadada"></div><div class="a" style="left:0px;top:639px;width:36px;height:1px;background:#c6c6c6"></div><div class="a" style="left:37px;top:668px;width:1857px;height:1px;background:#dadada"></div><div class="a" style="left:0px;top:668px;width:36px;height:1px;background:#c6c6c6"></div><div class="a" style="left:37px;top:697px;width:1857px;height:1px;background:#dadada"></div><div class="a" style="left:0px;top:697px;width:36px;height:1px;background:#c6c6c6"></div><div class="a" style="left:37px;top:726px;width:1857px;height:1px;background:#dadada"></div><div class="a" style="left:0px;top:726px;width:36px;height:1px;background:#c6c6c6"></div><div class="a" style="left:37px;top:755px;width:1857px;height:1px;background:#dadada"></div><div class="a" style="left:0px;top:755px;width:36px;height:1px;background:#c6c6c6"></div><div class="a" style="left:37px;top:784px;width:1857px;height:1px;background:#dadada"></div><div class="a" style="left:0px;top:784px;width:36px;height:1px;background:#c6c6c6"></div><div class="a" style="left:37px;top:813px;width:1857px;height:1px;background:#dadada"></div><div class="a" style="left:0px;top:813px;width:36px;height:1px;background:#c6c6c6"></div><div class="a" style="left:37px;top:842px;width:1857px;height:1px;background:#dadada"></div><div class="a" style="left:0px;top:842px;width:36px;height:1px;background:#c6c6c6"></div><div class="a" style="left:37px;top:871px;width:1857px;height:1px;background:#dadada"></div><div class="a" style="left:0px;top:871px;width:36px;height:1px;background:#c6c6c6"></div><div class="a" style="left:37px;top:900px;width:1857px;height:1px;background:#dadada"></div><div class="a" style="left:0px;top:900px;width:36px;height:1px;background:#c6c6c6"></div><div class="a" style="left:37px;top:929px;width:1857px;height:1px;background:#dadada"></div><div class="a" style="left:0px;top:929px;width:36px;height:1px;background:#c6c6c6"></div><div class="a" style="left:37px;top:958px;width:1857px;height:1px;background:#dadada"></div><div class="a" style="left:0px;top:958px;width:36px;height:1px;background:#c6c6c6"></div>
<div class="a" style="left:0px;top:349px;width:1894px;height:1px;background:#bfbfbf"></div>
<div class="a" style="left:36px;top:321px;width:1px;height:653px;background:#bfbfbf"></div>
<div class="a" style="left:1894px;top:349px;width:1px;height:626px;background:#a6a6a6"></div>
<div class="a" style="left:0px;top:974px;width:1895px;height:1px;background:#a6a6a6"></div>
<div class="a" style="left:107px;top:348px;width:174px;height:2px;background:#217346"></div>
<div class="a" style="left:35px;top:813px;width:2px;height:117px;background:#217346"></div>
<div class="t" style="left:31.5px;top:327px;width:80px;text-align:center;font-size:16.5px;color:#262626">A</div>
<div class="t" style="left:111.0px;top:327px;width:80px;text-align:center;font-size:16.5px;color:#217346">B</div>
<div class="t" style="left:197.5px;top:327px;width:80px;text-align:center;font-size:16.5px;color:#217346">C</div>
<div class="t" style="left:275.5px;top:327px;width:80px;text-align:center;font-size:16.5px;color:#262626">D</div>
<div class="t" style="left:355.0px;top:327px;width:80px;text-align:center;font-size:16.5px;color:#262626">E</div>
<div class="t" style="left:444.0px;top:327px;width:80px;text-align:center;font-size:16.5px;color:#262626">F</div>
<div class="t" style="left:526.0px;top:327px;width:80px;text-align:center;font-size:16.5px;color:#262626">G</div>
<div class="t" style="left:585.0px;top:327px;width:80px;text-align:center;font-size:16.5px;color:#262626">H</div>
<div class="t" style="left:642.5px;top:327px;width:80px;text-align:center;font-size:16.5px;color:#262626">I</div>
<div class="t" style="left:722.0px;top:327px;width:80px;text-align:center;font-size:16.5px;color:#262626">J</div>
<div class="t" style="left:810.0px;top:327px;width:80px;text-align:center;font-size:16.5px;color:#262626">K</div>
<div class="t" style="left:898.0px;top:327px;width:80px;text-align:center;font-size:16.5px;color:#262626">L</div>
<div class="t" style="left:986.0px;top:327px;width:80px;text-align:center;font-size:16.5px;color:#262626">M</div>
<div class="t" style="left:1067.0px;top:327px;width:80px;text-align:center;font-size:16.5px;color:#262626">N</div>
<div class="t" style="left:1141.0px;top:327px;width:80px;text-align:center;font-size:16.5px;color:#262626">O</div>
<div class="t" style="left:1222.0px;top:327px;width:80px;text-align:center;font-size:16.5px;color:#262626">P</div>
<div class="t" style="left:1310.0px;top:327px;width:80px;text-align:center;font-size:16.5px;color:#262626">Q</div>
<div class="t" style="left:1398.0px;top:327px;width:80px;text-align:center;font-size:16.5px;color:#262626">R</div>
<div class="t" style="left:1486.0px;top:327px;width:80px;text-align:center;font-size:16.5px;color:#262626">S</div>
<div class="t" style="left:1574.0px;top:327px;width:80px;text-align:center;font-size:16.5px;color:#262626">T</div>
<div class="t" style="left:1662.0px;top:327px;width:80px;text-align:center;font-size:16.5px;color:#262626">U</div>
<div class="t" style="left:1750.0px;top:327px;width:80px;text-align:center;font-size:16.5px;color:#262626">V</div>
<div class="t" style="left:1838px;top:327px;width:80px;text-align:center;font-size:16.5px;color:#262626">W</div>
<div class="t" style="left:0;top:358px;width:36px;text-align:center;font-size:16.5px;color:#262626">7</div>
<div class="t" style="left:0;top:387px;width:36px;text-align:center;font-size:16.5px;color:#262626">8</div>
<div class="t" style="left:0;top:416px;width:36px;text-align:center;font-size:16.5px;color:#262626">9</div>
<div class="t" style="left:0;top:445px;width:36px;text-align:center;font-size:16.5px;color:#262626">10</div>
<div class="t" style="left:0;top:474px;width:36px;text-align:center;font-size:16.5px;color:#262626">11</div>
<div class="t" style="left:0;top:503px;width:36px;text-align:center;font-size:16.5px;color:#262626">12</div>
<div class="t" style="left:0;top:532px;width:36px;text-align:center;font-size:16.5px;color:#262626">13</div>
<div class="t" style="left:0;top:561px;width:36px;text-align:center;font-size:16.5px;color:#262626">14</div>
<div class="t" style="left:0;top:590px;width:36px;text-align:center;font-size:16.5px;color:#262626">15</div>
<div class="t" style="left:0;top:619px;width:36px;text-align:center;font-size:16.5px;color:#262626">16</div>
<div class="t" style="left:0;top:648px;width:36px;text-align:center;font-size:16.5px;color:#262626">17</div>
<div class="t" style="left:0;top:677px;width:36px;text-align:center;font-size:16.5px;color:#262626">18</div>
<div class="t" style="left:0;top:706px;width:36px;text-align:center;font-size:16.5px;color:#262626">19</div>
<div class="t" style="left:0;top:735px;width:36px;text-align:center;font-size:16.5px;color:#262626">20</div>
<div class="t" style="left:0;top:764px;width:36px;text-align:center;font-size:16.5px;color:#262626">21</div>
<div class="t" style="left:0;top:793px;width:36px;text-align:center;font-size:16.5px;color:#262626">22</div>
<div class="t" style="left:0;top:822px;width:36px;text-align:center;font-size:16.5px;color:#217346">23</div>
<div class="t" style="left:0;top:851px;width:36px;text-align:center;font-size:16.5px;color:#217346">24</div>
<div class="t" style="left:0;top:880px;width:36px;text-align:center;font-size:16.5px;color:#217346">25</div>
<div class="t" style="left:0;top:909px;width:36px;text-align:center;font-size:16.5px;color:#217346">26</div>
<div class="t" style="left:0;top:938px;width:36px;text-align:center;font-size:16.5px;color:#262626">27</div>
<div class="a" style="left:0;top:958px;width:36px;height:16px;overflow:hidden"><div class="t" style="left:0;top:9px;width:36px;text-align:center;font-size:16.5px;color:#262626">28</div></div>
<div class="a" style="left:196px;top:814px;width:84px;height:28px;background:#c6c6c6"></div>
<div class="a" style="left:108px;top:843px;width:87px;height:28px;background:#c6c6c6"></div>
<div class="a" style="left:196px;top:843px;width:84px;height:28px;background:#c6c6c6"></div>
<div class="a" style="left:108px;top:872px;width:87px;height:28px;background:#c6c6c6"></div>
<div class="a" style="left:196px;top:872px;width:84px;height:28px;background:#c6c6c6"></div>
<div class="a" style="left:108px;top:901px;width:87px;height:28px;background:#c6c6c6"></div>
<div class="a" style="left:196px;top:901px;width:84px;height:28px;background:#c6c6c6"></div>
<div class="a" style="left:107px;top:350px;width:1px;height:87px;background:#000"></div><div class="a" style="left:195px;top:350px;width:1px;height:87px;background:#000"></div><div class="a" style="left:280px;top:350px;width:1px;height:87px;background:#000"></div><div class="a" style="left:351px;top:350px;width:1px;height:87px;background:#000"></div><div class="a" style="left:439px;top:350px;width:1px;height:87px;background:#000"></div><div class="a" style="left:529px;top:350px;width:1px;height:87px;background:#000"></div><div class="a" style="left:603px;top:350px;width:1px;height:87px;background:#000"></div><div class="a" style="left:37px;top:378px;width:567px;height:1px;background:#000"></div><div class="a" style="left:37px;top:407px;width:567px;height:1px;background:#000"></div><div class="a" style="left:37px;top:436px;width:567px;height:1px;background:#000"></div>
<div class="a" style="left:647px;top:350px;width:1px;height:58px;background:#000"></div><div class="a" style="left:718px;top:350px;width:1px;height:58px;background:#000"></div><div class="a" style="left:806px;top:350px;width:1px;height:58px;background:#000"></div><div class="a" style="left:894px;top:350px;width:1px;height:58px;background:#000"></div><div class="a" style="left:982px;top:350px;width:1px;height:58px;background:#000"></div><div class="a" style="left:1070px;top:350px;width:1px;height:58px;background:#000"></div><div class="a" style="left:1144px;top:350px;width:1px;height:58px;background:#000"></div><div class="a" style="left:1218px;top:350px;width:1px;height:58px;background:#000"></div><div class="a" style="left:648px;top:378px;width:571px;height:1px;background:#000"></div><div class="a" style="left:648px;top:407px;width:571px;height:1px;background:#000"></div>
<div class="a" style="left:107px;top:494px;width:1px;height:233px;background:#000"></div><div class="a" style="left:195px;top:494px;width:1px;height:233px;background:#000"></div><div class="a" style="left:280px;top:494px;width:1px;height:233px;background:#000"></div><div class="a" style="left:351px;top:494px;width:1px;height:233px;background:#000"></div><div class="a" style="left:439px;top:494px;width:1px;height:233px;background:#000"></div><div class="a" style="left:529px;top:494px;width:1px;height:233px;background:#000"></div><div class="a" style="left:603px;top:494px;width:1px;height:233px;background:#000"></div><div class="a" style="left:37px;top:494px;width:567px;height:1px;background:#000"></div><div class="a" style="left:37px;top:523px;width:567px;height:1px;background:#000"></div><div class="a" style="left:37px;top:552px;width:567px;height:1px;background:#000"></div><div class="a" style="left:37px;top:581px;width:567px;height:1px;background:#000"></div><div class="a" style="left:37px;top:610px;width:567px;height:1px;background:#000"></div><div class="a" style="left:37px;top:639px;width:567px;height:1px;background:#000"></div><div class="a" style="left:37px;top:668px;width:567px;height:1px;background:#000"></div><div class="a" style="left:37px;top:697px;width:567px;height:1px;background:#000"></div><div class="a" style="left:37px;top:726px;width:567px;height:1px;background:#000"></div>
<div class="a" style="left:647px;top:494px;width:1px;height:262px;background:#000"></div><div class="a" style="left:718px;top:494px;width:1px;height:262px;background:#000"></div><div class="a" style="left:806px;top:494px;width:1px;height:262px;background:#000"></div><div class="a" style="left:894px;top:494px;width:1px;height:262px;background:#000"></div><div class="a" style="left:982px;top:494px;width:1px;height:262px;background:#000"></div><div class="a" style="left:1070px;top:494px;width:1px;height:262px;background:#000"></div><div class="a" style="left:1144px;top:494px;width:1px;height:262px;background:#000"></div><div class="a" style="left:1218px;top:494px;width:1px;height:262px;background:#000"></div><div class="a" style="left:648px;top:494px;width:571px;height:1px;background:#000"></div><div class="a" style="left:648px;top:523px;width:571px;height:1px;background:#000"></div><div class="a" style="left:648px;top:552px;width:571px;height:1px;background:#000"></div><div class="a" style="left:648px;top:581px;width:571px;height:1px;background:#000"></div><div class="a" style="left:648px;top:610px;width:571px;height:1px;background:#000"></div><div class="a" style="left:648px;top:639px;width:571px;height:1px;background:#000"></div><div class="a" style="left:648px;top:668px;width:571px;height:1px;background:#000"></div><div class="a" style="left:648px;top:697px;width:571px;height:1px;background:#000"></div><div class="a" style="left:648px;top:726px;width:571px;height:1px;background:#000"></div><div class="a" style="left:648px;top:755px;width:571px;height:1px;background:#000"></div>
<div class="a" style="left:107px;top:784px;width:1px;height:146px;background:#000"></div><div class="a" style="left:195px;top:784px;width:1px;height:146px;background:#000"></div><div class="a" style="left:280px;top:784px;width:1px;height:146px;background:#000"></div><div class="a" style="left:37px;top:784px;width:244px;height:1px;background:#000"></div><div class="a" style="left:37px;top:813px;width:244px;height:1px;background:#000"></div><div class="a" style="left:37px;top:842px;width:244px;height:1px;background:#000"></div><div class="a" style="left:37px;top:871px;width:244px;height:1px;background:#000"></div><div class="a" style="left:37px;top:900px;width:244px;height:1px;background:#000"></div><div class="a" style="left:37px;top:929px;width:244px;height:1px;background:#000"></div>
<div class="t" style="left:16px;top:354.5px;width:111px;text-align:center;font-size:18.5px">제주</div><div class="t" style="left:87px;top:357px;width:128px;text-align:center;font-size:17.6px">JEJ</div><div class="t" style="left:175px;top:357px;width:125px;text-align:center;font-size:17.6px">2019.07</div><div class="t" style="left:260px;top:357px;width:111px;text-align:center;font-size:17.6px">K384</div><div class="t" style="left:331px;top:357px;width:128px;text-align:center;font-size:17.6px">INCK384</div><div class="t" style="left:439px;top:357px;width:80px;text-align:right;font-size:17.6px">5,257</div><div class="t" style="left:529px;top:357px;width:64px;text-align:right;font-size:17.6px">826</div><div class="t" style="left:627px;top:354.5px;width:111px;text-align:center;font-size:18.5px">부산</div><div class="t" style="left:698px;top:357px;width:128px;text-align:center;font-size:17.6px">BUS</div><div class="t" style="left:786px;top:357px;width:128px;text-align:center;font-size:17.6px">2019.02</div><div class="t" style="left:874px;top:357px;width:128px;text-align:center;font-size:17.6px">K577</div><div class="t" style="left:962px;top:357px;width:128px;text-align:center;font-size:17.6px">JEJK577</div><div class="t" style="left:1070px;top:357px;width:64px;text-align:right;font-size:17.6px">4,996</div><div class="t" style="left:1144px;top:357px;width:64px;text-align:right;font-size:17.6px">436</div><div class="t" style="left:16px;top:383.5px;width:111px;text-align:center;font-size:18.5px">인천</div><div class="t" style="left:87px;top:386px;width:128px;text-align:center;font-size:17.6px">INC</div><div class="t" style="left:175px;top:386px;width:125px;text-align:center;font-size:17.6px">2019.01</div><div class="t" style="left:260px;top:386px;width:111px;text-align:center;font-size:17.6px">5126</div><div class="t" style="left:331px;top:386px;width:128px;text-align:center;font-size:17.6px">BUS5126</div><div class="t" style="left:439px;top:386px;width:80px;text-align:right;font-size:17.6px">2,643</div><div class="t" style="left:529px;top:386px;width:64px;text-align:right;font-size:17.6px">1,825</div><div class="t" style="left:627px;top:383.5px;width:111px;text-align:center;font-size:18.5px">제주</div><div class="t" style="left:698px;top:386px;width:128px;text-align:center;font-size:17.6px">JEJ</div><div class="t" style="left:786px;top:386px;width:128px;text-align:center;font-size:17.6px">2019.11</div><div class="t" style="left:874px;top:386px;width:128px;text-align:center;font-size:17.6px">L060</div><div class="t" style="left:962px;top:386px;width:128px;text-align:center;font-size:17.6px">JEJL060</div><div class="t" style="left:1070px;top:386px;width:64px;text-align:right;font-size:17.6px">911</div><div class="t" style="left:1144px;top:386px;width:64px;text-align:right;font-size:17.6px">1,172</div><div class="t" style="left:16px;top:412.5px;width:111px;text-align:center;font-size:18.5px">제주</div><div class="t" style="left:87px;top:415px;width:128px;text-align:center;font-size:17.6px">JEJ</div><div class="t" style="left:175px;top:415px;width:125px;text-align:center;font-size:17.6px">2019.04</div><div class="t" style="left:260px;top:415px;width:111px;text-align:center;font-size:17.6px">7586</div><div class="t" style="left:331px;top:415px;width:128px;text-align:center;font-size:17.6px">JEJ7586</div><div class="t" style="left:439px;top:415px;width:80px;text-align:right;font-size:17.6px">2,894</div><div class="t" style="left:529px;top:415px;width:64px;text-align:right;font-size:17.6px">187</div><div class="t" style="left:16px;top:499.5px;width:111px;text-align:center;font-size:18.5px">공항명</div><div class="t" style="left:87px;top:499.5px;width:128px;text-align:center;font-size:18.5px">공항코드</div><div class="t" style="left:175px;top:499.5px;width:125px;text-align:center;font-size:18.5px">항공월</div><div class="t" style="left:260px;top:499.5px;width:111px;text-align:center;font-size:18.5px">항공편</div><div class="t" style="left:331px;top:499.5px;width:128px;text-align:center;font-size:18.5px">항공코드</div><div class="t" style="left:419px;top:499.5px;width:130px;text-align:center;font-size:18.5px">여객</div><div class="t" style="left:509px;top:499.5px;width:114px;text-align:center;font-size:18.5px">화물</div><div class="t" style="left:627px;top:499.5px;width:111px;text-align:center;font-size:18.5px">공항명</div><div class="t" style="left:698px;top:499.5px;width:128px;text-align:center;font-size:18.5px">공항코드</div><div class="t" style="left:786px;top:499.5px;width:128px;text-align:center;font-size:18.5px">항공월</div><div class="t" style="left:874px;top:499.5px;width:128px;text-align:center;font-size:18.5px">항공편</div><div class="t" style="left:962px;top:499.5px;width:128px;text-align:center;font-size:18.5px">항공코드</div><div class="t" style="left:1050px;top:499.5px;width:114px;text-align:center;font-size:18.5px">여객</div><div class="t" style="left:1124px;top:499.5px;width:114px;text-align:center;font-size:18.5px">화물</div><div class="t" style="left:16px;top:528.5px;width:111px;text-align:center;font-size:18.5px">부산</div><div class="t" style="left:87px;top:531px;width:128px;text-align:center;font-size:17.6px">BUS</div><div class="t" style="left:175px;top:531px;width:125px;text-align:center;font-size:17.6px">2019.01</div><div class="t" style="left:260px;top:531px;width:111px;text-align:center;font-size:17.6px">2688</div><div class="t" style="left:331px;top:531px;width:128px;text-align:center;font-size:17.6px">GIP2688</div><div class="t" style="left:439px;top:531px;width:80px;text-align:right;font-size:17.6px">1,523</div><div class="t" style="left:529px;top:531px;width:64px;text-align:right;font-size:17.6px">612</div><div class="t" style="left:627px;top:528.5px;width:111px;text-align:center;font-size:18.5px">제주</div><div class="t" style="left:698px;top:531px;width:128px;text-align:center;font-size:17.6px">JEJ</div><div class="t" style="left:786px;top:531px;width:128px;text-align:center;font-size:17.6px">2019.03</div><div class="t" style="left:874px;top:531px;width:128px;text-align:center;font-size:17.6px">3321</div><div class="t" style="left:962px;top:531px;width:128px;text-align:center;font-size:17.6px">BUS3321</div><div class="t" style="left:1070px;top:531px;width:64px;text-align:right;font-size:17.6px">2,210</div><div class="t" style="left:1144px;top:531px;width:64px;text-align:right;font-size:17.6px">904</div><div class="t" style="left:16px;top:557.5px;width:111px;text-align:center;font-size:18.5px">인천</div><div class="t" style="left:87px;top:560px;width:128px;text-align:center;font-size:17.6px">INC</div><div class="t" style="left:175px;top:560px;width:125px;text-align:center;font-size:17.6px">2019.12</div><div class="t" style="left:260px;top:560px;width:111px;text-align:center;font-size:17.6px">2774</div><div class="t" style="left:331px;top:560px;width:128px;text-align:center;font-size:17.6px">INC2774</div><div class="t" style="left:439px;top:560px;width:80px;text-align:right;font-size:17.6px">3,870</div><div class="t" style="left:529px;top:560px;width:64px;text-align:right;font-size:17.6px">1,402</div><div class="t" style="left:627px;top:557.5px;width:111px;text-align:center;font-size:18.5px">김포</div><div class="t" style="left:698px;top:560px;width:128px;text-align:center;font-size:17.6px">GIP</div><div class="t" style="left:786px;top:560px;width:128px;text-align:center;font-size:17.6px">2019.10</div><div class="t" style="left:874px;top:560px;width:128px;text-align:center;font-size:17.6px">5580</div><div class="t" style="left:962px;top:560px;width:128px;text-align:center;font-size:17.6px">GIP5580</div><div class="t" style="left:1070px;top:560px;width:64px;text-align:right;font-size:17.6px">3,112</div><div class="t" style="left:1144px;top:560px;width:64px;text-align:right;font-size:17.6px">1,245</div><div class="t" style="left:16px;top:586.5px;width:111px;text-align:center;font-size:18.5px">부산</div><div class="t" style="left:87px;top:589px;width:128px;text-align:center;font-size:17.6px">BUS</div><div class="t" style="left:175px;top:589px;width:125px;text-align:center;font-size:17.6px">2019.11</div><div class="t" style="left:260px;top:589px;width:111px;text-align:center;font-size:17.6px">2191</div><div class="t" style="left:331px;top:589px;width:128px;text-align:center;font-size:17.6px">BUS2191</div><div class="t" style="left:439px;top:589px;width:80px;text-align:right;font-size:17.6px">2,466</div><div class="t" style="left:529px;top:589px;width:64px;text-align:right;font-size:17.6px">705</div><div class="t" style="left:627px;top:586.5px;width:111px;text-align:center;font-size:18.5px">인천</div><div class="t" style="left:698px;top:589px;width:128px;text-align:center;font-size:17.6px">INC</div><div class="t" style="left:786px;top:589px;width:128px;text-align:center;font-size:17.6px">2019.04</div><div class="t" style="left:874px;top:589px;width:128px;text-align:center;font-size:17.6px">8802</div><div class="t" style="left:962px;top:589px;width:128px;text-align:center;font-size:17.6px">INC8802</div><div class="t" style="left:1070px;top:589px;width:64px;text-align:right;font-size:17.6px">4,401</div><div class="t" style="left:1144px;top:589px;width:64px;text-align:right;font-size:17.6px">1,509</div><div class="t" style="left:16px;top:615.5px;width:111px;text-align:center;font-size:18.5px">제주</div><div class="t" style="left:87px;top:618px;width:128px;text-align:center;font-size:17.6px">JEJ</div><div class="t" style="left:175px;top:618px;width:125px;text-align:center;font-size:17.6px">2019.08</div><div class="t" style="left:260px;top:618px;width:111px;text-align:center;font-size:17.6px">4465</div><div class="t" style="left:331px;top:618px;width:128px;text-align:center;font-size:17.6px">JEJ4465</div><div class="t" style="left:439px;top:618px;width:80px;text-align:right;font-size:17.6px">783</div><div class="t" style="left:529px;top:618px;width:64px;text-align:right;font-size:17.6px">391</div><div class="t" style="left:627px;top:615.5px;width:111px;text-align:center;font-size:18.5px">부산</div><div class="t" style="left:698px;top:618px;width:128px;text-align:center;font-size:17.6px">BUS</div><div class="t" style="left:786px;top:618px;width:128px;text-align:center;font-size:17.6px">2019.05</div><div class="t" style="left:874px;top:618px;width:128px;text-align:center;font-size:17.6px">7492</div><div class="t" style="left:962px;top:618px;width:128px;text-align:center;font-size:17.6px">INC7492</div><div class="t" style="left:1070px;top:618px;width:64px;text-align:right;font-size:17.6px">1,929</div><div class="t" style="left:1144px;top:618px;width:64px;text-align:right;font-size:17.6px">1,756</div><div class="t" style="left:16px;top:644.5px;width:111px;text-align:center;font-size:18.5px">김포</div><div class="t" style="left:87px;top:647px;width:128px;text-align:center;font-size:17.6px">GIP</div><div class="t" style="left:175px;top:647px;width:125px;text-align:center;font-size:17.6px">2019.09</div><div class="t" style="left:260px;top:647px;width:111px;text-align:center;font-size:17.6px">K022</div><div class="t" style="left:331px;top:647px;width:128px;text-align:center;font-size:17.6px">GIPK022</div><div class="t" style="left:439px;top:647px;width:80px;text-align:right;font-size:17.6px">4,049</div><div class="t" style="left:529px;top:647px;width:64px;text-align:right;font-size:17.6px">1,968</div><div class="t" style="left:627px;top:644.5px;width:111px;text-align:center;font-size:18.5px">부산</div><div class="t" style="left:698px;top:647px;width:128px;text-align:center;font-size:17.6px">BUS</div><div class="t" style="left:786px;top:647px;width:128px;text-align:center;font-size:17.6px">2019.08</div><div class="t" style="left:874px;top:647px;width:128px;text-align:center;font-size:17.6px">2318</div><div class="t" style="left:962px;top:647px;width:128px;text-align:center;font-size:17.6px">GIP2318</div><div class="t" style="left:1070px;top:647px;width:64px;text-align:right;font-size:17.6px">1,166</div><div class="t" style="left:1144px;top:647px;width:64px;text-align:right;font-size:17.6px">1,791</div><div class="t" style="left:16px;top:673.5px;width:111px;text-align:center;font-size:18.5px">김포</div><div class="t" style="left:87px;top:676px;width:128px;text-align:center;font-size:17.6px">GIP</div><div class="t" style="left:175px;top:676px;width:125px;text-align:center;font-size:17.6px">2019.07</div><div class="t" style="left:260px;top:676px;width:111px;text-align:center;font-size:17.6px">1685</div><div class="t" style="left:331px;top:676px;width:128px;text-align:center;font-size:17.6px">INC1685</div><div class="t" style="left:439px;top:676px;width:80px;text-align:right;font-size:17.6px">1,614</div><div class="t" style="left:529px;top:676px;width:64px;text-align:right;font-size:17.6px">1,066</div><div class="t" style="left:627px;top:673.5px;width:111px;text-align:center;font-size:18.5px">인천</div><div class="t" style="left:698px;top:676px;width:128px;text-align:center;font-size:17.6px">INC</div><div class="t" style="left:786px;top:676px;width:128px;text-align:center;font-size:17.6px">2019.06</div><div class="t" style="left:874px;top:676px;width:128px;text-align:center;font-size:17.6px">4516</div><div class="t" style="left:962px;top:676px;width:128px;text-align:center;font-size:17.6px">INC4516</div><div class="t" style="left:1070px;top:676px;width:64px;text-align:right;font-size:17.6px">5,535</div><div class="t" style="left:1144px;top:676px;width:64px;text-align:right;font-size:17.6px">318</div><div class="t" style="left:16px;top:702.5px;width:111px;text-align:center;font-size:18.5px">김포</div><div class="t" style="left:87px;top:705px;width:128px;text-align:center;font-size:17.6px">GIP</div><div class="t" style="left:175px;top:705px;width:125px;text-align:center;font-size:17.6px">2019.03</div><div class="t" style="left:260px;top:705px;width:111px;text-align:center;font-size:17.6px">6938</div><div class="t" style="left:331px;top:705px;width:128px;text-align:center;font-size:17.6px">GIP6938</div><div class="t" style="left:439px;top:705px;width:80px;text-align:right;font-size:17.6px">4,648</div><div class="t" style="left:529px;top:705px;width:64px;text-align:right;font-size:17.6px">995</div><div class="t" style="left:627px;top:702.5px;width:111px;text-align:center;font-size:18.5px">김포</div><div class="t" style="left:698px;top:705px;width:128px;text-align:center;font-size:17.6px">GIP</div><div class="t" style="left:786px;top:705px;width:128px;text-align:center;font-size:17.6px">2019.12</div><div class="t" style="left:874px;top:705px;width:128px;text-align:center;font-size:17.6px">9346</div><div class="t" style="left:962px;top:705px;width:128px;text-align:center;font-size:17.6px">JEJ9346</div><div class="t" style="left:1070px;top:705px;width:64px;text-align:right;font-size:17.6px">845</div><div class="t" style="left:1144px;top:705px;width:64px;text-align:right;font-size:17.6px">1,871</div><div class="t" style="left:627px;top:731.5px;width:111px;text-align:center;font-size:18.5px">인천</div><div class="t" style="left:698px;top:734px;width:128px;text-align:center;font-size:17.6px">INC</div><div class="t" style="left:786px;top:734px;width:128px;text-align:center;font-size:17.6px">2019.06</div><div class="t" style="left:874px;top:734px;width:128px;text-align:center;font-size:17.6px">6181</div><div class="t" style="left:962px;top:734px;width:128px;text-align:center;font-size:17.6px">INC6181</div><div class="t" style="left:1070px;top:734px;width:64px;text-align:right;font-size:17.6px">1,195</div><div class="t" style="left:1144px;top:734px;width:64px;text-align:right;font-size:17.6px">1,336</div><div class="t" style="left:16px;top:789.5px;width:111px;text-align:center;font-size:18.5px">공항명</div><div class="t" style="left:87px;top:789.5px;width:128px;text-align:center;font-size:18.5px">여객</div><div class="t" style="left:175px;top:789.5px;width:125px;text-align:center;font-size:18.5px">화물</div><div class="t" style="left:16px;top:818.5px;width:111px;text-align:center;font-size:18.5px">김포</div><div class="t" style="left:16px;top:847.5px;width:111px;text-align:center;font-size:18.5px">인천</div><div class="t" style="left:16px;top:876.5px;width:111px;text-align:center;font-size:18.5px">부산</div><div class="t" style="left:16px;top:905.5px;width:111px;text-align:center;font-size:18.5px">제주</div>
<div class="t" style="left:41px;top:472px;font-size:17.5px;color:#000;">[표3]</div>
<div class="t" style="left:41px;top:762px;font-size:17.5px;color:#000;">[표5]</div>
<div class="t" style="left:650px;top:472px;font-size:17.5px;color:#000;">[표4]</div>
<div class="a" style="left:106px;top:812px;width:176px;height:119px;border:2px solid #217346"></div>
<div class="a" style="left:277px;top:926px;width:7px;height:7px;background:#217346;border:1px solid #fff"></div>
<svg style="left:350px;top:783px" width="180" height="60" viewBox="0 0 180 60">
<rect x="0" y="0" width="180" height="60" fill="#41719c"/>
<path d="M2 2 L178 2 L171 9 L9 9 Z" fill="#7eb0e1"/>
<path d="M2 2 L9 9 L9 51 L2 58 Z" fill="#a3c4e8"/>
<path d="M178 2 L178 58 L171 51 L171 9 Z" fill="#3b6591"/>
<path d="M2 58 L9 51 L171 51 L178 58 Z" fill="#4a7aaa"/>
<rect x="9" y="9" width="162" height="42" fill="#5b9bd5"/>
</svg>
<div class="t" style="left:240.0px;top:804.0px;width:400px;text-align:center;font-size:18px;color:#fff;">공항별 평균 계산</div>
<div class="a" style="left:0px;top:975px;width:1920px;height:28px;background:#e6e6e6"></div>
<div class="a" style="left:1895px;top:321px;width:25px;height:654px;background:#e6e6e6"></div>
<div class="a" style="left:1898px;top:341px;width:19px;height:138px;background:#dcdcdc"></div>
<div class="a" style="left:1898px;top:479px;width:19px;height:477px;background:#fff;border:1px solid #c6c6c6"></div>
<div class="a" style="left:1898px;top:323px;width:19px;height:19px;background:#fff;border:1px solid #c6c6c6"></div>
<svg style="left:1902px;top:329px" width="11" height="6" viewBox="0 0 11 6"><path d="M0 6 L5.5 0 L11 6 Z" fill="#777"/></svg>
<div class="a" style="left:1898px;top:956px;width:19px;height:19px;background:#fff;border:1px solid #c6c6c6"></div>
<svg style="left:1902px;top:963px" width="11" height="6" viewBox="0 0 11 6"><path d="M0 0 L5.5 6 L11 0 Z" fill="#777"/></svg>
<svg style="left:27px;top:982px" width="6" height="10" viewBox="0 0 6 10"><path d="M6 0 L0 5 L6 10 Z" fill="#c8c8c8"/></svg>
<svg style="left:57px;top:982px" width="6" height="10" viewBox="0 0 6 10"><path d="M0 0 L6 5 L0 10 Z" fill="#c8c8c8"/></svg>
<div class="t" style="left:-42.5px;top:977.25px;width:400px;text-align:center;font-size:16.5px;color:#333;">기본작업-1</div>
<div class="t" style="left:66.5px;top:977.25px;width:400px;text-align:center;font-size:16.5px;color:#333;">기본작업-2</div>
<div class="t" style="left:167.0px;top:977.25px;width:400px;text-align:center;font-size:16.5px;color:#333;">계산작업</div>
<div class="t" style="left:259.0px;top:977.25px;width:400px;text-align:center;font-size:16.5px;color:#333;">김포공항</div>
<div class="t" style="left:359.5px;top:977.25px;width:400px;text-align:center;font-size:16.5px;color:#333;">분석작업-1</div>
<div class="a" style="left:614px;top:974px;width:110px;height:26px;background:#fff;border-left:1px solid #c6c6c6;border-right:1px solid #c6c6c6"></div>
<div class="a" style="left:614px;top:998px;width:110px;height:2px;background:#217346"></div>
<div class="t" style="left:468.5px;top:977.25px;width:400px;text-align:center;font-size:16.5px;color:#217346;">분석작업-2</div>
<div class="t" style="left:577.5px;top:977.25px;width:400px;text-align:center;font-size:16.5px;color:#333;">기타작업-1</div>
<div class="t" style="left:686.0px;top:977.25px;width:400px;text-align:center;font-size:16.5px;color:#333;">기타작업-2</div>
<div class="a" style="left:103px;top:979px;width:1px;height:20px;background:#a6a6a6"></div>
<div class="a" style="left:212px;top:979px;width:1px;height:20px;background:#a6a6a6"></div>
<div class="a" style="left:321px;top:979px;width:1px;height:20px;background:#a6a6a6"></div>
<div class="a" style="left:413px;top:979px;width:1px;height:20px;background:#a6a6a6"></div>
<div class="a" style="left:505px;top:979px;width:1px;height:20px;background:#a6a6a6"></div>
<div class="a" style="left:832px;top:979px;width:1px;height:20px;background:#a6a6a6"></div>
<div class="a" style="left:940px;top:979px;width:1px;height:20px;background:#a6a6a6"></div>
<svg style="left:973px;top:977px" width="22" height="22" viewBox="0 0 22 22"><circle cx="11" cy="11" r="9.5" fill="none" stroke="#555" stroke-width="1.3"/><path d="M11 5.5 V16.5 M5.5 11 H16.5" stroke="#555" stroke-width="1.4"/></svg>
<div class="a" style="left:1149px;top:981px;width:3px;height:3px;background:#9a9a9a"></div>
<div class="a" style="left:1149px;top:987px;width:3px;height:3px;background:#9a9a9a"></div>
<div class="a" style="left:1149px;top:993px;width:3px;height:3px;background:#9a9a9a"></div>
<div class="a" style="left:1167px;top:979px;width:727px;height:19px;background:#dcdcdc"></div>
<div class="a" style="left:1167px;top:979px;width:19px;height:19px;background:#fff;border:1px solid #c6c6c6"></div>
<svg style="left:1173px;top:983px" width="6" height="11" viewBox="0 0 6 11"><path d="M6 0 L0 5.5 L6 11 Z" fill="#777"/></svg>
<div class="a" style="left:1186px;top:979px;width:658px;height:19px;background:#fff;border:1px solid #c6c6c6"></div>
<div class="a" style="left:1876px;top:979px;width:19px;height:19px;background:#fff;border:1px solid #c6c6c6"></div>
<svg style="left:1882px;top:983px" width="6" height="11" viewBox="0 0 6 11"><path d="M0 0 L6 5.5 L0 11 Z" fill="#777"/></svg>
<div class="a" style="left:0px;top:1003px;width:1920px;height:27px;background:#f3f2f1"></div>
<div class="a" style="left:0px;top:1003px;width:1920px;height:1px;background:#d6d6d6"></div>
<svg style="left:10px;top:1009px" width="18" height="16" viewBox="0 0 18 16"><path d="M0.5 12 V0.5 H17.5 V3" fill="none" stroke="#555" stroke-width="1"/><path d="M0.5 3 H17.5 M3 6 H7 M3 9 H6 M3 12 H6" stroke="#555" stroke-width="1"/><circle cx="12.5" cy="10.5" r="4.5" fill="#f3f2f1" stroke="#555" stroke-width="1.1"/><circle cx="12.5" cy="10.5" r="2" fill="#555"/></svg>
<div class="a" style="left:1543px;top:1004px;width:50px;height:26px;background:#c8c6c4"></div>
<svg style="left:1559px;top:1009px" width="17" height="17" viewBox="0 0 17 17"><rect x="0.8" y="0.8" width="15.4" height="15.4" fill="none" stroke="#333" stroke-width="1.6"/><path d="M6 1 V16 M11 1 V16 M1 6 H16 M1 11 H16" stroke="#333" stroke-width="1.6"/></svg>
<svg style="left:1609px;top:1009px" width="18" height="17" viewBox="0 0 18 17"><rect x="0.7" y="0.7" width="16.6" height="15.6" fill="none" stroke="#444" stroke-width="1.4"/><rect x="3.7" y="3.5" width="10.6" height="10" fill="none" stroke="#444" stroke-width="1.2"/><path d="M6 6.5 H12 M6 8.5 H12 M6 10.5 H12" stroke="#444" stroke-width="1"/></svg>
<svg style="left:1659px;top:1009px" width="18" height="17" viewBox="0 0 18 17"><rect x="0.7" y="0.7" width="16.6" height="15.6" fill="none" stroke="#444" stroke-width="1.4"/><path d="M0.7 9 H10 V0.7 M5.5 0.7 V9" fill="none" stroke="#444" stroke-width="1.4"/></svg>
<div class="a" style="left:1700px;top:1016px;width:10px;height:1.5px;background:#555"></div>
<div class="a" style="left:1716px;top:1017px;width:124px;height:1px;background:#a6a6a6"></div>
<div class="a" style="left:1776px;top:1010px;width:6px;height:14px;background:#6a6a6a"></div>
<svg style="left:1846px;top:1011px" width="12" height="12" viewBox="0 0 12 12"><path d="M6 0 V12 M0 6 H12" stroke="#555" stroke-width="1.3"/></svg>
<div class="t" style="left:1874px;top:1010px;font-size:15.3px;color:#444;">100%</div>
<div class="a" style="left:0px;top:1030px;width:1920px;height:50px;background:#33302a"></div>
<svg style="left:20px;top:1045px" width="21" height="21" viewBox="0 0 21 21"><path d="M0 3 L9 1.7 V9.6 H0 Z M10 1.5 L21 0 V9.6 H10 Z M0 10.6 H9 V18.5 L0 17.2 Z M10 10.6 H21 V20.3 L10 18.7 Z" fill="#fff"/></svg>
<div class="a" style="left:60px;top:1030px;width:430px;height:50px;background:#f0f0f0;border-top:1px solid #cfcfcf"></div>
<svg style="left:75px;top:1045px" width="21" height="21" viewBox="0 0 21 21"><circle cx="13" cy="7.5" r="6.5" fill="none" stroke="#111" stroke-width="1.4"/><path d="M8.5 12 L1 19.5" stroke="#111" stroke-width="1.6"/></svg>
<div class="t" style="left:111px;top:1045px;font-size:19px;color:#1a1a1a;">검색하려면 여기에 입력하십시오.</div>
<svg style="left:508px;top:1045px" width="22" height="21" viewBox="0 0 22 21"><path d="M2 1 H13 M2 20 H13 M2 5 H13 V16 H2 Z M19 1 V5 M19 8 V13 M19 16 V20" fill="none" stroke="#fff" stroke-width="1.3"/></svg>
<div class="a" style="left:559px;top:1076px;width:51px;height:4px;background:#76b9ed"></div>
<svg style="left:569px;top:1042px" width="30" height="26" viewBox="0 0 30 26"><path d="M0 2 H10 L13 5 H29 V25 H0 Z" fill="#e8a400"/><rect x="0" y="7" width="29" height="18" fill="#ffc83d"/><path d="M8 15 H21 V25 H18 V19 H11 V25 H8 Z" fill="#2f78c8"/></svg>
<svg style="left:631px;top:1040px" width="31" height="31" viewBox="0 0 31 31"><defs><linearGradient id="e1" x1="0" y1="0" x2="0.3" y2="1"><stop offset="0" stop-color="#35b7f0"/><stop offset="1" stop-color="#0a74d6"/></linearGradient><linearGradient id="e2" x1="0" y1="0" x2="1" y2="0.7"><stop offset="0" stop-color="#28b8ee"/><stop offset="0.5" stop-color="#2fcfb0"/><stop offset="1" stop-color="#5ee06a"/></linearGradient></defs><circle cx="15" cy="15.5" r="15" fill="url(#e1)"/><path d="M0.3 13 C1.5 5 7.5 0.5 15 0.5 C23.5 0.5 30 7 30 14.5 C30 19.5 26 22.5 20.5 22.5 C16.5 22.5 14.5 20.5 14.5 18.5 C14.5 16 17.5 15.5 17.5 12.5 C17.5 9 14 7.5 10.5 7.5 C5.5 7.5 1.5 10 0.3 13 Z" fill="url(#e2)"/><path d="M8.5 15 C8.5 23 14 29.5 21 29.5 C24 29.5 27 28 29 25.5 C27.5 27.5 24.5 28.5 21.5 28.2 C16 27.7 12 23 12 18 Z" fill="#0b5cb0"/><path d="M11.5 16 C11.5 12.5 13.5 11 16 11.8 C17.3 12.3 17.3 14.5 15.5 16 C14 17.3 14 20 16 21.5 C18.5 23.3 23 23.5 27 22 C24 24.5 18 25 14.5 22.5 C12.5 21 11.5 18.5 11.5 16 Z" fill="#33312a"/></svg>
<svg style="left:694px;top:1041px" width="29" height="29" viewBox="0 0 29 29"><circle cx="14.5" cy="14.5" r="14" fill="#db4437"/><path d="M14.5 14.5 L2.4 7.5 A14 14 0 0 0 7.5 26.6 Z" fill="#0f9d58"/><path d="M14.5 14.5 L7.5 26.6 A14 14 0 0 0 28.5 14.5 L14.5 14.5 Z" fill="#f4b400"/><path d="M14.5 14.5 L28.5 14.5 A14 14 0 0 0 26.6 7.5 Z" fill="#db4437"/><circle cx="14.5" cy="14.5" r="6.5" fill="#fff"/><circle cx="14.5" cy="14.5" r="5.2" fill="#4285f4"/></svg>
<svg style="left:755px;top:1040px" width="30" height="32" viewBox="0 0 30 32"><path d="M9 8 V4 A3 3 0 0 1 12 1 H18 A3 3 0 0 1 21 4 V8" fill="none" stroke="#ddd" stroke-width="1.8"/><rect x="1" y="8" width="28" height="23" fill="#f2f2f2"/><rect x="9.5" y="14" width="5" height="5" fill="#f35325"/><rect x="15.5" y="14" width="5" height="5" fill="#81bc06"/><rect x="9.5" y="20" width="5" height="5" fill="#05a6f0"/><rect x="15.5" y="20" width="5" height="5" fill="#ffba08"/></svg>
<svg style="left:817px;top:1041px" width="30" height="28" viewBox="0 0 30 28"><path d="M0 9 L15 0.5 L30 9 Z" fill="#0a5cb5"/><path d="M0 9 H30 V27.5 H0 Z" fill="#1d95e0"/><path d="M3.5 9.3 H26.5 L15 17.5 Z" fill="#f0f0f0"/><path d="M30 9.5 L15 18 L30 27.5 Z" fill="#3cc3f0"/><path d="M0 9.5 L15 18 L0 27.5 Z" fill="#27a6ea" opacity="0.5"/></svg>
<svg style="left:881px;top:1040px" width="30" height="30" viewBox="0 0 30 30"><defs><linearGradient id="ie" x1="0" y1="0" x2="0" y2="1"><stop offset="0" stop-color="#55d0f8"/><stop offset="1" stop-color="#2c9ee0"/></linearGradient></defs><ellipse cx="14.5" cy="15.5" rx="11.5" ry="12.5" fill="url(#ie)"/><path d="M8.5 13.5 C9 9.5 11 7.5 14.5 7.5 C18 7.5 20.5 9.5 21 13.5 Z" fill="#33302a"/><path d="M9 19 H27 V23.5 H20 C15 23.5 11 22 9 19 Z" fill="#33302a"/><path d="M4 25 C0 30 7 29 14 23 C21 17 29 8 26 4 C24 1.5 19 3 14.5 6" fill="none" stroke="#f2c20f" stroke-width="2.3"/></svg>
<svg style="left:941px;top:1041px" width="30" height="30" viewBox="0 0 30 30"><defs><clipPath id="gc"><path d="M0 0 H30 V14 L22 14 L19 30 H0 Z"/></clipPath></defs><path clip-path="url(#gc)" d="M24.74 11.99 L27.96 12.51 L27.96 17.49 L24.74 18.01 L24.02 19.76 L25.93 22.40 L22.40 25.93 L19.76 24.02 L18.01 24.74 L17.49 27.96 L12.51 27.96 L11.99 24.74 L10.24 24.02 L7.60 25.93 L4.07 22.40 L5.98 19.76 L5.26 18.01 L2.04 17.49 L2.04 12.51 L5.26 11.99 L5.98 10.24 L4.07 7.60 L7.60 4.07 L10.24 5.98 L11.99 5.26 L12.51 2.04 L17.49 2.04 L18.01 5.26 L19.76 5.98 L22.40 4.07 L25.93 7.60 L24.02 10.24 Z" fill="none" stroke="#fff" stroke-width="1.3" stroke-linejoin="round"/><circle cx="15" cy="15" r="4.6" fill="none" stroke="#fff" stroke-width="1.3"/><text x="19.5" y="29" font-size="13" fill="#fff" font-family="Liberation Sans">S</text></svg>
<svg style="left:1002px;top:1040px" width="31" height="31" viewBox="0 0 31 31"><defs><linearGradient id="wt" x1="0" y1="0" x2="0" y2="1"><stop offset="0" stop-color="#18e0c8"/><stop offset="1" stop-color="#12b3b5"/></linearGradient><linearGradient id="wb" x1="0" y1="0" x2="1" y2="1"><stop offset="0" stop-color="#ffffff"/><stop offset="1" stop-color="#b9d9dc"/></linearGradient></defs><circle cx="15.5" cy="14.5" r="13.8" fill="url(#wt)"/><path d="M2.5 10 C4 4 9 0.7 15.5 0.7 C21 0.7 25 3.5 27 7 C22 8 17 12 13 10.5 C9 9 6 8.5 2.5 10 Z" fill="#1f2d8f"/><path d="M27 7 C29.5 11 30 18 27 22.5 C24 27 18 29 12 28 C16 27 20 23 21 18 C22 13 24 9 27 7 Z" fill="url(#wb)"/><path d="M12 28 C8 29 4.5 29.5 1.5 29 C4 27.5 6 25.5 7 23.5 C8.5 26 10 27.3 12 28 Z" fill="#14c6bf"/><circle cx="15" cy="14" r="0.9" fill="#1f2d8f"/><circle cx="15" cy="4" r="0.5" fill="#8fa0ff"/><circle cx="11" cy="6" r="0.5" fill="#8fa0ff"/><circle cx="19" cy="3" r="0.5" fill="#8fa0ff"/></svg>
<div class="a" style="left:1050px;top:1030px;width:61px;height:50px;background:#5a5750"></div>
<div class="a" style="left:1050px;top:1076px;width:61px;height:4px;background:#76b9ed"></div>
<svg style="left:1065px;top:1041px" width="30" height="28" viewBox="0 0 30 28"><rect x="6.5" y="0" width="11.5" height="7" fill="#21a366"/><rect x="18" y="0" width="11.5" height="7" fill="#33c481"/><rect x="6.5" y="7" width="23" height="7" fill="#21a366"/><rect x="6.5" y="14" width="23" height="7" fill="#107c41"/><rect x="6.5" y="21" width="23" height="6.5" rx="0.8" fill="#185c37"/><rect x="0" y="6.5" width="15" height="14.5" rx="1.2" fill="#107c41"/><path d="M4.3 9.5 L10.7 18 M10.7 9.5 L4.3 18" stroke="#fff" stroke-width="2"/></svg>
<div class="t" style="left:1350px;top:1045px;font-size:15.5px;color:#fff;">바탕 화면</div>
<div class="t" style="left:1423px;top:1032px;font-size:17px;color:#fff;">»</div>
<svg style="left:1451px;top:1048px" width="16" height="9" viewBox="0 0 16 9"><path d="M1 8 L8 1 L15 8" fill="none" stroke="#fff" stroke-width="1.4"/></svg>
<svg style="left:1489px;top:1046px" width="21" height="14" viewBox="0 0 21 14"><path d="M5 13 H18 A3 3 0 0 0 18 7 A5 5 0 0 0 9 4 A4 4 0 0 0 3 8 A3 3 0 0 0 5 13 Z" fill="#e8e8e8"/></svg>
<svg style="left:1528px;top:1046px" width="22" height="14" viewBox="0 0 22 14"><rect x="2" y="2" width="17" height="10" fill="none" stroke="#fff" stroke-width="1.3"/><rect x="4" y="4" width="13" height="6" fill="#fff"/><rect x="19" y="5" width="2" height="4" fill="#fff"/><path d="M0 1 H4 M2 0 V2" stroke="#fff" stroke-width="1.1"/></svg>
<svg style="left:1571px;top:1045px" width="18" height="17" viewBox="0 0 18 17"><path d="M1 16 A14 14 0 0 1 16 2 M4 16 A11 11 0 0 1 16 5 M7 16 A8 8 0 0 1 16 8 M10 16 A5 5 0 0 1 16 11" fill="none" stroke="#fff" stroke-width="1.1"/><circle cx="15" cy="15" r="1.5" fill="#fff"/></svg>
<svg style="left:1607px;top:1044px" width="23" height="20" viewBox="0 0 23 20"><path d="M1 7 H5 L10 2 V18 L5 13 H1 Z" fill="none" stroke="#fff" stroke-width="1.2"/><path d="M13 7 A4 4 0 0 1 13 13 M16 4 A8 8 0 0 1 16 16 M19 1.5 A11 11 0 0 1 19 18.5" fill="none" stroke="#aaa" stroke-width="1.1"/><path d="M13 7 A4 4 0 0 1 13 13" fill="none" stroke="#fff" stroke-width="1.2"/></svg>
<svg style="left:1653px;top:1044px" width="22" height="22" viewBox="0 0 22 22"><path d="M4 20 C1 20 1 16 4 14 L14 2 A2.5 2.5 0 0 1 18 5 L9 16 L6 17 L7 14" fill="none" stroke="#fff" stroke-width="1.3"/><path d="M14 9 C18 8 21 10 18 12" fill="none" stroke="#fff" stroke-width="1.3"/></svg>
<svg style="left:1692px;top:1044px" width="22" height="22" viewBox="0 0 22 22"><circle cx="11" cy="11" r="10" fill="#d0d0d0"/><path d="M6.5 6.5 L15.5 15.5 M15.5 6.5 L6.5 15.5" stroke="#333" stroke-width="2.2"/></svg>
<div class="a" style="left:1729px;top:1043px;width:20px;height:22px;background:#fff"></div>
<div class="t" style="left:1730px;top:1045px;font-size:18px;color:#000;">한</div>
<div class="t" style="left:1777px;top:1035px;font-size:15.5px;color:#fff;">오후 1:06</div>
<div class="t" style="left:1769px;top:1057px;font-size:16.5px;color:#fff;letter-spacing:-0.4px">2021-01-21</div>
<svg style="left:1869px;top:1043px" width="32" height="32" viewBox="0 0 32 32"><path d="M1 1 H20 V15 H8 L4 19 V15 H1 Z" fill="#fff"/><path d="M5 5 H16 M5 8 H16 M5 11 H13" stroke="#33302a" stroke-width="1.2"/><circle cx="19" cy="19" r="9.5" fill="#33302a" stroke="#fff" stroke-width="1.3"/></svg>
<div class="t" style="left:1882px;top:1052px;font-size:15px;color:#fff;font-weight:bold">6</div>
<div class="a" style="left:1902px;top:1030px;width:1px;height:50px;background:#6a6560"></div>
<div class="a" style="left:404px;top:470px;width:1132px;height:159px;box-shadow:0 6px 18px rgba(0,0,0,0.28),0 0 6px rgba(0,0,0,0.12)"></div>
<div class="a" style="left:404px;top:470px;width:1132px;height:159px;background:#f0f0f0;border:1px solid #707070"></div>
<div class="a" style="left:405px;top:471px;width:1130px;height:37px;background:#fff"></div>
<div class="t" style="left:414px;top:482px;font-size:15.5px;color:#000;">Microsoft Excel</div>
<svg style="left:1507px;top:482px" width="14" height="14" viewBox="0 0 14 14"><path d="M0.5 0.5 L13.5 13.5 M13.5 0.5 L0.5 13.5" stroke="#111" stroke-width="1.2"/></svg>
<svg style="left:420px;top:528px" width="42" height="40" viewBox="0 0 42 40"><path d="M21 1.5 L41 38.5 H1 Z" fill="#fcd116" stroke="#e0b300" stroke-width="1"/><rect x="19.5" y="13" width="3" height="16" fill="#000"/><rect x="19.5" y="32" width="3" height="3.5" fill="#000"/></svg>
<div class="t" style="left:477px;top:540px;font-size:15.4px;color:#000;">''1급 E형 저장용1.xlsm'!공항별평균' 매크로를 실행할 수 없습니다. 이 통합 문서에서 사용할 수 없는 매크로이거나 모든 매크로를 사용하지 못할 수 있습니다.</div>
<div class="a" style="left:908px;top:582px;width:126px;height:33px;background:#e1e1e1;border:2px solid #0078d7"></div>
<div class="t" style="left:771.0px;top:590.5px;width:400px;text-align:center;font-size:15px;color:#000;">확인</div></body></html>
